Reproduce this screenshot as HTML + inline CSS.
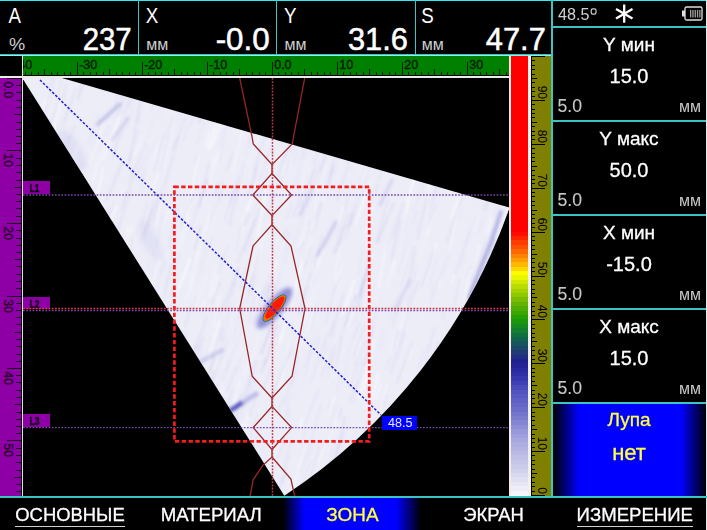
<!DOCTYPE html>
<html><head><meta charset="utf-8"><style>
html,body{margin:0;padding:0;background:#000;width:707px;height:530px;overflow:hidden}
svg{display:block}
</style></head><body>
<svg width="707" height="530" viewBox="0 0 707 530" font-family="Liberation Sans, sans-serif">
<defs>
<linearGradient id="cbar" x1="0" y1="0" x2="0" y2="1">
 <stop offset="0" stop-color="#ff0000"/>
 <stop offset="0.40" stop-color="#ff0000"/>
 <stop offset="0.47" stop-color="#ff5000"/>
 <stop offset="0.50" stop-color="#ff9000"/>
 <stop offset="0.53" stop-color="#ffd000"/>
 <stop offset="0.555" stop-color="#f0f000"/>
 <stop offset="0.60" stop-color="#a0c800"/>
 <stop offset="0.66" stop-color="#30a010"/>
 <stop offset="0.70" stop-color="#208040"/>
 <stop offset="0.74" stop-color="#205868"/>
 <stop offset="0.78" stop-color="#202898"/>
 <stop offset="0.82" stop-color="#3838b0"/>
 <stop offset="0.88" stop-color="#7070c8"/>
 <stop offset="0.94" stop-color="#b8b8e4"/>
 <stop offset="1" stop-color="#f8f8fc"/>
</linearGradient>
<linearGradient id="selh" x1="0" y1="0" x2="1" y2="0">
 <stop offset="0" stop-color="#000"/>
 <stop offset="0.17" stop-color="#0000ff"/>
 <stop offset="0.83" stop-color="#0000ff"/>
 <stop offset="1" stop-color="#000"/>
</linearGradient>
<linearGradient id="selm" x1="0" y1="0" x2="1" y2="0">
 <stop offset="0" stop-color="#000"/>
 <stop offset="0.155" stop-color="#0000ff"/>
 <stop offset="0.82" stop-color="#0000ff"/>
 <stop offset="1" stop-color="#000"/>
</linearGradient>
<filter id="blur1" x="-50%" y="-50%" width="200%" height="200%"><feGaussianBlur stdDeviation="0.9"/></filter><clipPath id="rulclip"><rect x="23" y="56" width="486" height="19"/></clipPath><filter id="blur2" x="-50%" y="-50%" width="200%" height="200%"><feGaussianBlur stdDeviation="2"/></filter><clipPath id="imgclip"><rect x="23" y="78" width="486" height="418"/></clipPath>
<clipPath id="fanclip"><path id="fanpath" d="M13.5,64 L509.6,207.57 A567.87,567.87 0 0 1 284.28,495.63 Z"/></clipPath>
</defs>
<rect x="0" y="0" width="707" height="530" fill="#000" />
<rect x="0" y="0" width="707" height="1" fill="#30ecec" />
<rect x="138" y="0" width="1" height="54" fill="#3cc4c4" />
<rect x="276" y="0" width="1" height="54" fill="#3cc4c4" />
<rect x="415" y="0" width="1" height="54" fill="#3cc4c4" />
<rect x="0" y="54" width="553" height="1" fill="#3cc4c4" />
<rect x="0" y="55" width="553" height="1" fill="#90f0f0" />
<rect x="551" y="0" width="2" height="498" fill="#3cc4c4" />
<text x="8.5" y="22.5" font-size="21.5" fill="#fff" text-anchor="start" textLength="12.5" lengthAdjust="spacingAndGlyphs" >A</text>
<text x="9" y="50.2" font-size="17" fill="#d0d0d0" text-anchor="start" textLength="16.2" lengthAdjust="spacingAndGlyphs" >%</text>
<text x="131.7" y="49.5" font-size="31" fill="#fff" text-anchor="end" textLength="49" lengthAdjust="spacingAndGlyphs" stroke="#fff" stroke-width="0.5" >237</text>
<text x="145.8" y="22.5" font-size="21.5" fill="#fff" text-anchor="start" textLength="12.5" lengthAdjust="spacingAndGlyphs" >X</text>
<text x="146.3" y="50.2" font-size="16" fill="#d0d0d0" text-anchor="start" >мм</text>
<text x="269.7" y="49.5" font-size="31" fill="#fff" text-anchor="end" textLength="54" lengthAdjust="spacingAndGlyphs" stroke="#fff" stroke-width="0.5" >-0.0</text>
<text x="283.9" y="22.5" font-size="21.5" fill="#fff" text-anchor="start" textLength="12.5" lengthAdjust="spacingAndGlyphs" >Y</text>
<text x="284.4" y="50.2" font-size="16" fill="#d0d0d0" text-anchor="start" >мм</text>
<text x="407.9" y="49.5" font-size="31" fill="#fff" text-anchor="end" textLength="60" lengthAdjust="spacingAndGlyphs" stroke="#fff" stroke-width="0.5" >31.6</text>
<text x="421.2" y="22.5" font-size="21.5" fill="#fff" text-anchor="start" textLength="12.5" lengthAdjust="spacingAndGlyphs" >S</text>
<text x="421.7" y="50.2" font-size="16" fill="#d0d0d0" text-anchor="start" >мм</text>
<text x="545.8" y="49.5" font-size="31" fill="#fff" text-anchor="end" textLength="60" lengthAdjust="spacingAndGlyphs" stroke="#fff" stroke-width="0.5" >47.7</text>
<rect x="23" y="56" width="486" height="19" fill="#008000" />
<rect x="23" y="75" width="486" height="1" fill="#000" />
<rect x="0" y="76" width="510" height="2" fill="#ececec" />
<rect x="22" y="56" width="1" height="440" fill="#e0e0e0" />
<rect x="25" y="72" width="1" height="3" fill="#001800" />
<rect x="31" y="72" width="1" height="3" fill="#001800" />
<rect x="38" y="72" width="1" height="3" fill="#001800" />
<rect x="44" y="69" width="1" height="6" fill="#001800" />
<rect x="51" y="72" width="1" height="3" fill="#001800" />
<rect x="57" y="72" width="1" height="3" fill="#001800" />
<rect x="64" y="72" width="1" height="3" fill="#001800" />
<rect x="70" y="72" width="1" height="3" fill="#001800" />
<rect x="77" y="62" width="1" height="13" fill="#001800" />
<text x="79.2" y="68.6" font-size="12.5" fill="#001800" text-anchor="start" stroke="#001800" stroke-width="0.35" >-30</text>
<rect x="83" y="72" width="1" height="3" fill="#001800" />
<rect x="90" y="72" width="1" height="3" fill="#001800" />
<rect x="96" y="72" width="1" height="3" fill="#001800" />
<rect x="103" y="72" width="1" height="3" fill="#001800" />
<rect x="109" y="69" width="1" height="6" fill="#001800" />
<rect x="116" y="72" width="1" height="3" fill="#001800" />
<rect x="122" y="72" width="1" height="3" fill="#001800" />
<rect x="129" y="72" width="1" height="3" fill="#001800" />
<rect x="135" y="72" width="1" height="3" fill="#001800" />
<rect x="142" y="62" width="1" height="13" fill="#001800" />
<text x="144.2" y="68.6" font-size="12.5" fill="#001800" text-anchor="start" stroke="#001800" stroke-width="0.35" >-20</text>
<rect x="148" y="72" width="1" height="3" fill="#001800" />
<rect x="155" y="72" width="1" height="3" fill="#001800" />
<rect x="161" y="72" width="1" height="3" fill="#001800" />
<rect x="168" y="72" width="1" height="3" fill="#001800" />
<rect x="174" y="69" width="1" height="6" fill="#001800" />
<rect x="181" y="72" width="1" height="3" fill="#001800" />
<rect x="187" y="72" width="1" height="3" fill="#001800" />
<rect x="194" y="72" width="1" height="3" fill="#001800" />
<rect x="200" y="72" width="1" height="3" fill="#001800" />
<rect x="207" y="62" width="1" height="13" fill="#001800" />
<text x="209.2" y="68.6" font-size="12.5" fill="#001800" text-anchor="start" stroke="#001800" stroke-width="0.35" >-10</text>
<rect x="213" y="72" width="1" height="3" fill="#001800" />
<rect x="220" y="72" width="1" height="3" fill="#001800" />
<rect x="226" y="72" width="1" height="3" fill="#001800" />
<rect x="233" y="72" width="1" height="3" fill="#001800" />
<rect x="239" y="69" width="1" height="6" fill="#001800" />
<rect x="246" y="72" width="1" height="3" fill="#001800" />
<rect x="252" y="72" width="1" height="3" fill="#001800" />
<rect x="259" y="72" width="1" height="3" fill="#001800" />
<rect x="265" y="72" width="1" height="3" fill="#001800" />
<rect x="272" y="62" width="1" height="13" fill="#001800" />
<text x="274.2" y="68.6" font-size="12.5" fill="#001800" text-anchor="start" stroke="#001800" stroke-width="0.35" >0.0</text>
<rect x="278" y="72" width="1" height="3" fill="#001800" />
<rect x="285" y="72" width="1" height="3" fill="#001800" />
<rect x="291" y="72" width="1" height="3" fill="#001800" />
<rect x="298" y="72" width="1" height="3" fill="#001800" />
<rect x="304" y="69" width="1" height="6" fill="#001800" />
<rect x="311" y="72" width="1" height="3" fill="#001800" />
<rect x="317" y="72" width="1" height="3" fill="#001800" />
<rect x="324" y="72" width="1" height="3" fill="#001800" />
<rect x="330" y="72" width="1" height="3" fill="#001800" />
<rect x="337" y="62" width="1" height="13" fill="#001800" />
<text x="339.2" y="68.6" font-size="12.5" fill="#001800" text-anchor="start" stroke="#001800" stroke-width="0.35" >10</text>
<rect x="343" y="72" width="1" height="3" fill="#001800" />
<rect x="350" y="72" width="1" height="3" fill="#001800" />
<rect x="356" y="72" width="1" height="3" fill="#001800" />
<rect x="363" y="72" width="1" height="3" fill="#001800" />
<rect x="369" y="69" width="1" height="6" fill="#001800" />
<rect x="376" y="72" width="1" height="3" fill="#001800" />
<rect x="382" y="72" width="1" height="3" fill="#001800" />
<rect x="389" y="72" width="1" height="3" fill="#001800" />
<rect x="395" y="72" width="1" height="3" fill="#001800" />
<rect x="402" y="62" width="1" height="13" fill="#001800" />
<text x="404.2" y="68.6" font-size="12.5" fill="#001800" text-anchor="start" stroke="#001800" stroke-width="0.35" >20</text>
<rect x="408" y="72" width="1" height="3" fill="#001800" />
<rect x="415" y="72" width="1" height="3" fill="#001800" />
<rect x="421" y="72" width="1" height="3" fill="#001800" />
<rect x="428" y="72" width="1" height="3" fill="#001800" />
<rect x="434" y="69" width="1" height="6" fill="#001800" />
<rect x="441" y="72" width="1" height="3" fill="#001800" />
<rect x="447" y="72" width="1" height="3" fill="#001800" />
<rect x="454" y="72" width="1" height="3" fill="#001800" />
<rect x="460" y="72" width="1" height="3" fill="#001800" />
<rect x="467" y="62" width="1" height="13" fill="#001800" />
<text x="469.2" y="68.6" font-size="12.5" fill="#001800" text-anchor="start" stroke="#001800" stroke-width="0.35" >30</text>
<rect x="473" y="72" width="1" height="3" fill="#001800" />
<rect x="480" y="72" width="1" height="3" fill="#001800" />
<rect x="486" y="72" width="1" height="3" fill="#001800" />
<rect x="493" y="72" width="1" height="3" fill="#001800" />
<rect x="499" y="69" width="1" height="6" fill="#001800" />
<rect x="506" y="72" width="1" height="3" fill="#001800" />
<g clip-path="url(#rulclip)">
<text x="14.2" y="68.6" font-size="12.5" fill="#001800" text-anchor="start" stroke="#001800" stroke-width="0.35" >-40</text>
</g>
<rect x="0" y="78" width="21" height="418" fill="#8e00a6" />
<rect x="7" y="78" width="14" height="1" fill="#200020" />
<text transform="translate(3.8,81.5) rotate(90)" font-size="12" fill="#200020" stroke="#200020" stroke-width="0.25">0.0</text>
<rect x="16" y="85" width="5" height="1" fill="#200020" />
<rect x="16" y="92" width="5" height="1" fill="#200020" />
<rect x="16" y="100" width="5" height="1" fill="#200020" />
<rect x="16" y="107" width="5" height="1" fill="#200020" />
<rect x="14" y="114" width="7" height="1" fill="#200020" />
<rect x="16" y="122" width="5" height="1" fill="#200020" />
<rect x="16" y="129" width="5" height="1" fill="#200020" />
<rect x="16" y="136" width="5" height="1" fill="#200020" />
<rect x="16" y="143" width="5" height="1" fill="#200020" />
<rect x="7" y="150" width="14" height="1" fill="#200020" />
<text transform="translate(3.8,153.5) rotate(90)" font-size="12" fill="#200020" stroke="#200020" stroke-width="0.25">10</text>
<rect x="16" y="158" width="5" height="1" fill="#200020" />
<rect x="16" y="165" width="5" height="1" fill="#200020" />
<rect x="16" y="172" width="5" height="1" fill="#200020" />
<rect x="16" y="180" width="5" height="1" fill="#200020" />
<rect x="14" y="187" width="7" height="1" fill="#200020" />
<rect x="16" y="194" width="5" height="1" fill="#200020" />
<rect x="16" y="201" width="5" height="1" fill="#200020" />
<rect x="16" y="208" width="5" height="1" fill="#200020" />
<rect x="16" y="216" width="5" height="1" fill="#200020" />
<rect x="7" y="223" width="14" height="1" fill="#200020" />
<text transform="translate(3.8,226.5) rotate(90)" font-size="12" fill="#200020" stroke="#200020" stroke-width="0.25">20</text>
<rect x="16" y="230" width="5" height="1" fill="#200020" />
<rect x="16" y="238" width="5" height="1" fill="#200020" />
<rect x="16" y="245" width="5" height="1" fill="#200020" />
<rect x="16" y="252" width="5" height="1" fill="#200020" />
<rect x="14" y="259" width="7" height="1" fill="#200020" />
<rect x="16" y="266" width="5" height="1" fill="#200020" />
<rect x="16" y="274" width="5" height="1" fill="#200020" />
<rect x="16" y="281" width="5" height="1" fill="#200020" />
<rect x="16" y="288" width="5" height="1" fill="#200020" />
<rect x="7" y="296" width="14" height="1" fill="#200020" />
<text transform="translate(3.8,299.5) rotate(90)" font-size="12" fill="#200020" stroke="#200020" stroke-width="0.25">30</text>
<rect x="16" y="303" width="5" height="1" fill="#200020" />
<rect x="16" y="310" width="5" height="1" fill="#200020" />
<rect x="16" y="317" width="5" height="1" fill="#200020" />
<rect x="16" y="324" width="5" height="1" fill="#200020" />
<rect x="14" y="332" width="7" height="1" fill="#200020" />
<rect x="16" y="339" width="5" height="1" fill="#200020" />
<rect x="16" y="346" width="5" height="1" fill="#200020" />
<rect x="16" y="354" width="5" height="1" fill="#200020" />
<rect x="16" y="361" width="5" height="1" fill="#200020" />
<rect x="7" y="368" width="14" height="1" fill="#200020" />
<text transform="translate(3.8,371.5) rotate(90)" font-size="12" fill="#200020" stroke="#200020" stroke-width="0.25">40</text>
<rect x="16" y="375" width="5" height="1" fill="#200020" />
<rect x="16" y="382" width="5" height="1" fill="#200020" />
<rect x="16" y="390" width="5" height="1" fill="#200020" />
<rect x="16" y="397" width="5" height="1" fill="#200020" />
<rect x="14" y="404" width="7" height="1" fill="#200020" />
<rect x="16" y="412" width="5" height="1" fill="#200020" />
<rect x="16" y="419" width="5" height="1" fill="#200020" />
<rect x="16" y="426" width="5" height="1" fill="#200020" />
<rect x="16" y="433" width="5" height="1" fill="#200020" />
<rect x="7" y="440" width="14" height="1" fill="#200020" />
<text transform="translate(3.8,443.5) rotate(90)" font-size="12" fill="#200020" stroke="#200020" stroke-width="0.25">50</text>
<rect x="16" y="448" width="5" height="1" fill="#200020" />
<rect x="16" y="455" width="5" height="1" fill="#200020" />
<rect x="16" y="462" width="5" height="1" fill="#200020" />
<rect x="16" y="470" width="5" height="1" fill="#200020" />
<rect x="14" y="477" width="7" height="1" fill="#200020" />
<rect x="16" y="484" width="5" height="1" fill="#200020" />
<rect x="16" y="491" width="5" height="1" fill="#200020" />
<g clip-path="url(#imgclip)">
<path d="M13.5,64 L509.6,207.57 A567.87,567.87 0 0 1 284.28,495.63 Z" fill="#ededf8"/>
<g clip-path="url(#fanclip)"><g filter="url(#blur1)"><path d="M185.3,118.5 l-13.2,32.8" stroke="#9090d8" stroke-width="2.5" opacity="0.09" fill="none"/>
<path d="M49.9,283.6 l-2.9,9.1" stroke="#a8a8e0" stroke-width="1" opacity="0.07" fill="none"/>
<path d="M230.3,419.3 l-4.5,12.4" stroke="#9090d8" stroke-width="2.5" opacity="0.11" fill="none"/>
<path d="M215.4,484.9 l-2.1,9.7" stroke="#ffffff" stroke-width="1.5" opacity="0.29" fill="none"/>
<path d="M85.2,182.9 l-14.9,39.6" stroke="#ffffff" stroke-width="2.5" opacity="0.41" fill="none"/>
<path d="M204.5,300.6 l-4.0,9.9" stroke="#ffffff" stroke-width="1.5" opacity="0.42" fill="none"/>
<path d="M234.4,189.5 l-9.7,31.1" stroke="#a8a8e0" stroke-width="1.5" opacity="0.12" fill="none"/>
<path d="M367.0,159.6 l-9.1,30.8" stroke="#8080d0" stroke-width="1.5" opacity="0.10" fill="none"/>
<path d="M323.6,87.7 l-10.5,27.6" stroke="#a8a8e0" stroke-width="1.5" opacity="0.13" fill="none"/>
<path d="M228.2,478.3 l-3.1,10.8" stroke="#a0a0dc" stroke-width="1.5" opacity="0.12" fill="none"/>
<path d="M314.1,306.1 l-5.8,26.5" stroke="#ffffff" stroke-width="1.5" opacity="0.42" fill="none"/>
<path d="M54.7,374.3 l-5.7,20.2" stroke="#a0a0dc" stroke-width="2" opacity="0.12" fill="none"/>
<path d="M462.2,196.7 l-15.1,45.1" stroke="#9090d8" stroke-width="2.5" opacity="0.10" fill="none"/>
<path d="M132.9,175.0 l-12.0,37.1" stroke="#9090d8" stroke-width="2" opacity="0.07" fill="none"/>
<path d="M218.9,182.9 l-4.2,13.1" stroke="#a0a0dc" stroke-width="2.5" opacity="0.12" fill="none"/>
<path d="M507.5,352.3 l-8.2,22.5" stroke="#a8a8e0" stroke-width="1" opacity="0.07" fill="none"/>
<path d="M350.2,55.1 l-15.1,40.2" stroke="#9090d8" stroke-width="1.5" opacity="0.07" fill="none"/>
<path d="M285.8,322.3 l-7.8,19.9" stroke="#ffffff" stroke-width="2.5" opacity="0.41" fill="none"/>
<path d="M386.7,244.5 l-8.4,43.8" stroke="#ffffff" stroke-width="2.5" opacity="0.35" fill="none"/>
<path d="M217.5,265.4 l-8.7,23.2" stroke="#ffffff" stroke-width="1.5" opacity="0.29" fill="none"/>
<path d="M188.1,88.9 l-2.9,7.5" stroke="#a0a0dc" stroke-width="1" opacity="0.11" fill="none"/>
<path d="M57.5,147.9 l-6.2,23.0" stroke="#ffffff" stroke-width="1.5" opacity="0.34" fill="none"/>
<path d="M87.5,411.3 l-14.6,47.5" stroke="#a0a0dc" stroke-width="2" opacity="0.07" fill="none"/>
<path d="M72.1,208.0 l-4.1,18.7" stroke="#ffffff" stroke-width="1.5" opacity="0.26" fill="none"/>
<path d="M488.0,290.4 l-3.9,13.6" stroke="#ffffff" stroke-width="1" opacity="0.32" fill="none"/>
<path d="M341.2,88.3 l-12.3,41.7" stroke="#a0a0dc" stroke-width="1.5" opacity="0.12" fill="none"/>
<path d="M284.7,394.7 l-7.5,20.5" stroke="#a8a8e0" stroke-width="1.5" opacity="0.13" fill="none"/>
<path d="M387.3,153.4 l-9.4,28.2" stroke="#9090d8" stroke-width="1" opacity="0.12" fill="none"/>
<path d="M256.7,137.4 l-10.7,31.7" stroke="#a0a0dc" stroke-width="1.5" opacity="0.07" fill="none"/>
<path d="M73.3,261.5 l-6.5,21.2" stroke="#9090d8" stroke-width="2.5" opacity="0.10" fill="none"/>
<path d="M341.4,408.3 l-2.9,11.2" stroke="#8080d0" stroke-width="2" opacity="0.12" fill="none"/>
<path d="M260.9,127.3 l-13.3,39.0" stroke="#ffffff" stroke-width="2" opacity="0.35" fill="none"/>
<path d="M486.7,374.6 l-5.5,14.1" stroke="#ffffff" stroke-width="1.5" opacity="0.48" fill="none"/>
<path d="M419.1,111.9 l-7.8,42.0" stroke="#a8a8e0" stroke-width="1.5" opacity="0.10" fill="none"/>
<path d="M90.4,52.5 l-12.5,47.2" stroke="#8080d0" stroke-width="2.5" opacity="0.13" fill="none"/>
<path d="M240.0,424.8 l-14.8,40.1" stroke="#a8a8e0" stroke-width="1.5" opacity="0.08" fill="none"/>
<path d="M140.7,313.2 l-5.7,18.0" stroke="#9090d8" stroke-width="1.5" opacity="0.13" fill="none"/>
<path d="M196.6,251.1 l-6.5,31.9" stroke="#ffffff" stroke-width="2" opacity="0.28" fill="none"/>
<path d="M99.5,267.8 l-10.2,43.5" stroke="#9090d8" stroke-width="2.5" opacity="0.12" fill="none"/>
<path d="M99.6,115.0 l-12.4,31.7" stroke="#a0a0dc" stroke-width="1" opacity="0.11" fill="none"/>
<path d="M284.2,257.6 l-8.3,39.8" stroke="#a8a8e0" stroke-width="1" opacity="0.08" fill="none"/>
<path d="M45.8,99.6 l-10.3,24.9" stroke="#ffffff" stroke-width="1" opacity="0.33" fill="none"/>
<path d="M499.7,322.9 l-5.5,15.4" stroke="#ffffff" stroke-width="2.5" opacity="0.45" fill="none"/>
<path d="M271.9,161.8 l-6.2,29.3" stroke="#ffffff" stroke-width="1.5" opacity="0.47" fill="none"/>
<path d="M123.2,250.3 l-7.9,24.2" stroke="#9090d8" stroke-width="1.5" opacity="0.11" fill="none"/>
<path d="M233.7,151.8 l-7.5,19.3" stroke="#8080d0" stroke-width="1.5" opacity="0.11" fill="none"/>
<path d="M201.5,172.3 l-4.0,13.2" stroke="#ffffff" stroke-width="1" opacity="0.47" fill="none"/>
<path d="M101.9,348.7 l-4.2,16.9" stroke="#ffffff" stroke-width="2.5" opacity="0.33" fill="none"/>
<path d="M123.3,189.3 l-14.7,35.4" stroke="#ffffff" stroke-width="2.5" opacity="0.36" fill="none"/>
<path d="M33.7,196.1 l-9.7,32.8" stroke="#9090d8" stroke-width="1" opacity="0.14" fill="none"/>
<path d="M408.4,482.0 l-4.2,11.7" stroke="#a8a8e0" stroke-width="1" opacity="0.08" fill="none"/>
<path d="M88.5,229.0 l-10.1,45.2" stroke="#ffffff" stroke-width="1.5" opacity="0.29" fill="none"/>
<path d="M477.3,298.0 l-13.9,34.8" stroke="#8080d0" stroke-width="1" opacity="0.07" fill="none"/>
<path d="M460.3,181.6 l-3.2,8.1" stroke="#9090d8" stroke-width="1.5" opacity="0.11" fill="none"/>
<path d="M131.5,177.7 l-5.0,12.1" stroke="#ffffff" stroke-width="2.5" opacity="0.48" fill="none"/>
<path d="M156.4,111.4 l-10.3,28.3" stroke="#a8a8e0" stroke-width="1" opacity="0.08" fill="none"/>
<path d="M113.6,454.4 l-9.7,33.0" stroke="#a0a0dc" stroke-width="1.5" opacity="0.10" fill="none"/>
<path d="M353.1,165.8 l-7.4,41.1" stroke="#9090d8" stroke-width="1" opacity="0.06" fill="none"/>
<path d="M272.8,476.6 l-10.1,27.8" stroke="#9090d8" stroke-width="2" opacity="0.11" fill="none"/>
<path d="M341.7,337.2 l-6.3,30.3" stroke="#a0a0dc" stroke-width="2.5" opacity="0.12" fill="none"/>
<path d="M506.6,196.5 l-10.4,41.7" stroke="#ffffff" stroke-width="1.5" opacity="0.50" fill="none"/>
<path d="M502.2,425.8 l-2.2,8.3" stroke="#ffffff" stroke-width="1.5" opacity="0.29" fill="none"/>
<path d="M67.0,410.2 l-11.2,43.1" stroke="#ffffff" stroke-width="1.5" opacity="0.31" fill="none"/>
<path d="M165.8,260.6 l-4.4,13.9" stroke="#a0a0dc" stroke-width="1.5" opacity="0.14" fill="none"/>
<path d="M498.3,296.3 l-3.4,18.0" stroke="#a8a8e0" stroke-width="1.5" opacity="0.09" fill="none"/>
<path d="M24.5,220.7 l-8.0,26.8" stroke="#a8a8e0" stroke-width="1.5" opacity="0.10" fill="none"/>
<path d="M24.2,178.0 l-3.6,11.2" stroke="#ffffff" stroke-width="1" opacity="0.26" fill="none"/>
<path d="M173.7,154.5 l-9.2,31.3" stroke="#8080d0" stroke-width="1.5" opacity="0.13" fill="none"/>
<path d="M409.0,307.1 l-9.6,38.9" stroke="#a8a8e0" stroke-width="2" opacity="0.08" fill="none"/>
<path d="M328.3,111.6 l-10.3,41.4" stroke="#8080d0" stroke-width="2.5" opacity="0.09" fill="none"/>
<path d="M368.9,264.9 l-10.8,44.9" stroke="#9090d8" stroke-width="2.5" opacity="0.13" fill="none"/>
<path d="M310.7,436.1 l-9.0,35.6" stroke="#9090d8" stroke-width="1.5" opacity="0.06" fill="none"/>
<path d="M86.5,219.0 l-2.7,12.1" stroke="#9090d8" stroke-width="2.5" opacity="0.11" fill="none"/>
<path d="M332.4,349.5 l-11.0,26.3" stroke="#8080d0" stroke-width="1" opacity="0.13" fill="none"/>
<path d="M463.5,94.9 l-7.1,29.3" stroke="#a0a0dc" stroke-width="2" opacity="0.12" fill="none"/>
<path d="M441.4,152.3 l-13.6,37.4" stroke="#ffffff" stroke-width="2" opacity="0.46" fill="none"/>
<path d="M61.4,452.2 l-7.6,18.6" stroke="#9090d8" stroke-width="1.5" opacity="0.11" fill="none"/>
<path d="M187.4,332.3 l-9.7,35.8" stroke="#9090d8" stroke-width="1.5" opacity="0.10" fill="none"/>
<path d="M260.1,482.5 l-4.2,11.4" stroke="#a0a0dc" stroke-width="2" opacity="0.12" fill="none"/>
<path d="M163.5,250.5 l-7.2,39.6" stroke="#a8a8e0" stroke-width="2.5" opacity="0.08" fill="none"/>
<path d="M65.8,264.0 l-7.5,18.7" stroke="#ffffff" stroke-width="2.5" opacity="0.50" fill="none"/>
<path d="M218.3,442.3 l-17.6,43.7" stroke="#a8a8e0" stroke-width="1" opacity="0.12" fill="none"/>
<path d="M152.6,208.5 l-8.6,32.2" stroke="#9090d8" stroke-width="1.5" opacity="0.12" fill="none"/>
<path d="M138.8,442.9 l-10.9,26.3" stroke="#ffffff" stroke-width="1" opacity="0.42" fill="none"/>
<path d="M222.6,370.6 l-8.0,24.2" stroke="#a0a0dc" stroke-width="1" opacity="0.06" fill="none"/>
<path d="M389.1,424.4 l-2.5,12.8" stroke="#8080d0" stroke-width="1" opacity="0.08" fill="none"/>
<path d="M209.1,214.9 l-13.4,48.1" stroke="#ffffff" stroke-width="1.5" opacity="0.44" fill="none"/>
<path d="M439.9,185.8 l-2.6,9.8" stroke="#a8a8e0" stroke-width="1.5" opacity="0.14" fill="none"/>
<path d="M238.3,186.0 l-9.1,39.4" stroke="#9090d8" stroke-width="2" opacity="0.12" fill="none"/>
<path d="M335.7,439.9 l-13.2,45.7" stroke="#9090d8" stroke-width="1" opacity="0.13" fill="none"/>
<path d="M222.8,327.7 l-2.9,13.5" stroke="#9090d8" stroke-width="2" opacity="0.13" fill="none"/>
<path d="M293.8,131.4 l-8.4,24.0" stroke="#8080d0" stroke-width="1.5" opacity="0.12" fill="none"/>
<path d="M342.5,236.0 l-5.2,17.2" stroke="#9090d8" stroke-width="2" opacity="0.07" fill="none"/>
<path d="M105.8,137.3 l-13.3,44.1" stroke="#ffffff" stroke-width="1.5" opacity="0.48" fill="none"/>
<path d="M510.7,257.0 l-4.9,13.0" stroke="#a8a8e0" stroke-width="1" opacity="0.09" fill="none"/>
<path d="M67.2,163.8 l-5.1,18.1" stroke="#8080d0" stroke-width="1" opacity="0.13" fill="none"/>
<path d="M210.4,382.8 l-5.6,15.9" stroke="#ffffff" stroke-width="1" opacity="0.32" fill="none"/>
<path d="M497.9,110.1 l-7.6,28.1" stroke="#9090d8" stroke-width="1.5" opacity="0.08" fill="none"/>
<path d="M144.2,228.8 l-5.0,26.3" stroke="#a8a8e0" stroke-width="1" opacity="0.06" fill="none"/>
<path d="M371.4,441.7 l-7.5,26.9" stroke="#9090d8" stroke-width="1" opacity="0.09" fill="none"/>
<path d="M478.2,403.4 l-8.1,43.2" stroke="#9090d8" stroke-width="1.5" opacity="0.08" fill="none"/>
<path d="M95.9,481.8 l-2.7,12.3" stroke="#9090d8" stroke-width="2" opacity="0.10" fill="none"/>
<path d="M41.1,397.7 l-3.5,17.4" stroke="#a8a8e0" stroke-width="1.5" opacity="0.11" fill="none"/>
<path d="M286.2,239.5 l-14.8,37.3" stroke="#ffffff" stroke-width="1.5" opacity="0.49" fill="none"/>
<path d="M121.9,163.2 l-15.9,38.0" stroke="#a0a0dc" stroke-width="2.5" opacity="0.14" fill="none"/>
<path d="M163.9,185.7 l-14.7,40.7" stroke="#a8a8e0" stroke-width="2.5" opacity="0.10" fill="none"/>
<path d="M41.0,230.7 l-13.3,32.7" stroke="#ffffff" stroke-width="1.5" opacity="0.47" fill="none"/>
<path d="M339.8,96.5 l-5.3,16.7" stroke="#a8a8e0" stroke-width="1.5" opacity="0.10" fill="none"/>
<path d="M364.5,367.8 l-7.2,22.1" stroke="#a0a0dc" stroke-width="1" opacity="0.12" fill="none"/>
<path d="M275.3,135.2 l-15.9,46.1" stroke="#a8a8e0" stroke-width="1.5" opacity="0.10" fill="none"/>
<path d="M151.5,446.3 l-3.3,12.1" stroke="#a8a8e0" stroke-width="2.5" opacity="0.13" fill="none"/>
<path d="M259.1,456.5 l-2.8,10.0" stroke="#9090d8" stroke-width="2" opacity="0.08" fill="none"/>
<path d="M499.2,126.3 l-3.8,9.4" stroke="#ffffff" stroke-width="2" opacity="0.47" fill="none"/>
<path d="M457.8,360.6 l-9.6,49.0" stroke="#a8a8e0" stroke-width="1.5" opacity="0.07" fill="none"/>
<path d="M479.8,386.4 l-2.4,9.0" stroke="#a0a0dc" stroke-width="2" opacity="0.14" fill="none"/>
<path d="M238.9,111.6 l-4.2,10.5" stroke="#9090d8" stroke-width="2" opacity="0.10" fill="none"/>
<path d="M398.4,214.4 l-13.2,38.1" stroke="#9090d8" stroke-width="2" opacity="0.06" fill="none"/>
<path d="M260.2,208.4 l-16.3,43.7" stroke="#8080d0" stroke-width="1.5" opacity="0.13" fill="none"/>
<path d="M39.7,226.2 l-9.7,41.0" stroke="#ffffff" stroke-width="1" opacity="0.26" fill="none"/>
<path d="M52.9,456.5 l-4.4,18.3" stroke="#a0a0dc" stroke-width="2.5" opacity="0.09" fill="none"/>
<path d="M185.3,475.3 l-2.3,9.6" stroke="#a0a0dc" stroke-width="1.5" opacity="0.08" fill="none"/>
<path d="M377.5,305.6 l-7.9,41.1" stroke="#9090d8" stroke-width="1" opacity="0.13" fill="none"/>
<path d="M75.7,364.3 l-6.3,26.8" stroke="#ffffff" stroke-width="1.5" opacity="0.45" fill="none"/>
<path d="M85.8,279.4 l-1.6,8.2" stroke="#8080d0" stroke-width="1.5" opacity="0.12" fill="none"/>
<path d="M320.9,200.8 l-6.8,20.3" stroke="#9090d8" stroke-width="2.5" opacity="0.10" fill="none"/>
<path d="M215.1,126.6 l-6.4,24.3" stroke="#ffffff" stroke-width="2" opacity="0.39" fill="none"/>
<path d="M101.1,247.7 l-4.6,11.5" stroke="#9090d8" stroke-width="2.5" opacity="0.08" fill="none"/>
<path d="M235.0,472.2 l-17.3,45.7" stroke="#ffffff" stroke-width="1.5" opacity="0.37" fill="none"/>
<path d="M460.2,156.1 l-7.0,29.8" stroke="#a0a0dc" stroke-width="1" opacity="0.08" fill="none"/>
<path d="M304.6,212.1 l-13.6,36.5" stroke="#a8a8e0" stroke-width="1.5" opacity="0.08" fill="none"/>
<path d="M100.3,434.9 l-10.4,30.6" stroke="#a0a0dc" stroke-width="2" opacity="0.14" fill="none"/>
<path d="M273.9,149.2 l-10.7,40.6" stroke="#9090d8" stroke-width="1" opacity="0.06" fill="none"/>
<path d="M456.8,156.6 l-8.4,25.5" stroke="#a8a8e0" stroke-width="1.5" opacity="0.07" fill="none"/>
<path d="M116.0,472.4 l-6.3,31.9" stroke="#ffffff" stroke-width="1.5" opacity="0.47" fill="none"/>
<path d="M243.9,161.8 l-7.7,39.9" stroke="#8080d0" stroke-width="1" opacity="0.11" fill="none"/>
<path d="M328.0,152.6 l-8.5,21.9" stroke="#a0a0dc" stroke-width="1.5" opacity="0.06" fill="none"/>
<path d="M383.4,442.4 l-9.2,41.2" stroke="#8080d0" stroke-width="2" opacity="0.09" fill="none"/>
<path d="M325.6,99.0 l-2.7,8.9" stroke="#9090d8" stroke-width="2" opacity="0.09" fill="none"/>
<path d="M412.0,348.6 l-4.1,13.9" stroke="#ffffff" stroke-width="1.5" opacity="0.42" fill="none"/>
<path d="M222.8,181.5 l-3.9,20.5" stroke="#8080d0" stroke-width="1.5" opacity="0.11" fill="none"/>
<path d="M199.0,227.3 l-7.9,43.6" stroke="#8080d0" stroke-width="1.5" opacity="0.08" fill="none"/>
<path d="M377.6,153.5 l-1.6,8.1" stroke="#9090d8" stroke-width="2" opacity="0.13" fill="none"/>
<path d="M223.9,436.8 l-9.7,25.6" stroke="#9090d8" stroke-width="1" opacity="0.10" fill="none"/>
<path d="M335.5,455.5 l-3.1,11.3" stroke="#8080d0" stroke-width="1.5" opacity="0.10" fill="none"/>
<path d="M94.4,177.2 l-5.8,29.3" stroke="#ffffff" stroke-width="1" opacity="0.37" fill="none"/>
<path d="M417.3,478.2 l-5.9,15.2" stroke="#ffffff" stroke-width="1" opacity="0.33" fill="none"/>
<path d="M319.2,338.0 l-2.8,11.3" stroke="#8080d0" stroke-width="1.5" opacity="0.12" fill="none"/>
<path d="M133.5,222.7 l-9.4,42.5" stroke="#ffffff" stroke-width="1.5" opacity="0.30" fill="none"/>
<path d="M220.3,281.5 l-8.8,22.5" stroke="#8080d0" stroke-width="1.5" opacity="0.13" fill="none"/>
<path d="M119.8,429.1 l-10.9,42.0" stroke="#9090d8" stroke-width="1.5" opacity="0.09" fill="none"/>
<path d="M248.5,415.4 l-10.4,39.3" stroke="#ffffff" stroke-width="1.5" opacity="0.31" fill="none"/>
<path d="M215.9,214.4 l-10.3,27.3" stroke="#ffffff" stroke-width="1" opacity="0.50" fill="none"/>
<path d="M251.7,245.6 l-7.4,33.2" stroke="#ffffff" stroke-width="1.5" opacity="0.35" fill="none"/>
<path d="M55.5,212.8 l-5.2,22.8" stroke="#ffffff" stroke-width="2.5" opacity="0.41" fill="none"/>
<path d="M47.5,103.9 l-15.2,44.2" stroke="#9090d8" stroke-width="2.5" opacity="0.06" fill="none"/>
<path d="M275.6,210.1 l-17.3,44.7" stroke="#ffffff" stroke-width="1" opacity="0.43" fill="none"/>
<path d="M426.5,129.7 l-14.2,47.1" stroke="#8080d0" stroke-width="1.5" opacity="0.12" fill="none"/>
<path d="M478.6,87.1 l-5.3,22.1" stroke="#a0a0dc" stroke-width="1.5" opacity="0.13" fill="none"/>
<path d="M156.8,414.0 l-4.0,13.4" stroke="#a8a8e0" stroke-width="2" opacity="0.11" fill="none"/>
<path d="M325.9,161.0 l-8.2,22.2" stroke="#a8a8e0" stroke-width="2" opacity="0.11" fill="none"/>
<path d="M159.0,199.4 l-5.3,23.2" stroke="#9090d8" stroke-width="1.5" opacity="0.12" fill="none"/>
<path d="M51.0,415.9 l-14.4,46.4" stroke="#ffffff" stroke-width="2.5" opacity="0.42" fill="none"/>
<path d="M462.3,163.5 l-6.4,29.8" stroke="#a0a0dc" stroke-width="1.5" opacity="0.09" fill="none"/>
<path d="M204.9,122.7 l-8.1,20.3" stroke="#a8a8e0" stroke-width="1.5" opacity="0.11" fill="none"/>
<path d="M494.3,183.4 l-9.7,28.0" stroke="#8080d0" stroke-width="2.5" opacity="0.13" fill="none"/>
<path d="M382.0,383.1 l-5.7,16.3" stroke="#ffffff" stroke-width="2" opacity="0.38" fill="none"/>
<path d="M461.0,118.3 l-4.5,17.0" stroke="#9090d8" stroke-width="1" opacity="0.06" fill="none"/>
<path d="M197.9,104.9 l-7.9,21.6" stroke="#a0a0dc" stroke-width="2.5" opacity="0.11" fill="none"/>
<path d="M125.1,325.3 l-10.1,26.1" stroke="#8080d0" stroke-width="1.5" opacity="0.07" fill="none"/>
<path d="M72.0,322.7 l-10.1,43.4" stroke="#a0a0dc" stroke-width="2" opacity="0.14" fill="none"/>
<path d="M53.6,401.1 l-12.2,43.8" stroke="#ffffff" stroke-width="2.5" opacity="0.40" fill="none"/>
<path d="M276.5,275.0 l-5.8,13.8" stroke="#ffffff" stroke-width="1" opacity="0.26" fill="none"/>
<path d="M119.5,116.9 l-17.0,43.1" stroke="#ffffff" stroke-width="2.5" opacity="0.41" fill="none"/>
<path d="M120.5,233.3 l-7.6,28.8" stroke="#ffffff" stroke-width="2" opacity="0.29" fill="none"/>
<path d="M172.6,194.2 l-2.0,9.8" stroke="#8080d0" stroke-width="2" opacity="0.10" fill="none"/>
<path d="M212.4,236.3 l-17.2,43.0" stroke="#a8a8e0" stroke-width="2" opacity="0.08" fill="none"/>
<path d="M73.1,165.3 l-3.1,9.1" stroke="#8080d0" stroke-width="1.5" opacity="0.06" fill="none"/>
<path d="M335.2,344.0 l-7.2,36.1" stroke="#a0a0dc" stroke-width="1.5" opacity="0.11" fill="none"/>
<path d="M501.6,142.6 l-17.3,41.5" stroke="#a8a8e0" stroke-width="1.5" opacity="0.13" fill="none"/>
<path d="M127.5,116.7 l-16.3,43.5" stroke="#a0a0dc" stroke-width="2" opacity="0.11" fill="none"/>
<path d="M210.2,413.4 l-8.5,45.9" stroke="#ffffff" stroke-width="2.5" opacity="0.37" fill="none"/>
<path d="M280.9,68.3 l-1.7,9.0" stroke="#ffffff" stroke-width="1.5" opacity="0.47" fill="none"/>
<path d="M411.2,222.7 l-8.9,31.3" stroke="#a8a8e0" stroke-width="1.5" opacity="0.06" fill="none"/>
<path d="M76.2,330.2 l-2.7,14.5" stroke="#9090d8" stroke-width="1" opacity="0.06" fill="none"/>
<path d="M363.8,324.5 l-8.8,36.2" stroke="#ffffff" stroke-width="1" opacity="0.44" fill="none"/>
<path d="M121.5,465.7 l-7.7,29.4" stroke="#9090d8" stroke-width="2" opacity="0.08" fill="none"/>
<path d="M124.3,61.1 l-9.4,46.9" stroke="#8080d0" stroke-width="1" opacity="0.11" fill="none"/>
<path d="M259.1,107.1 l-10.6,39.9" stroke="#a0a0dc" stroke-width="1.5" opacity="0.09" fill="none"/>
<path d="M156.9,199.1 l-17.8,43.6" stroke="#a0a0dc" stroke-width="1.5" opacity="0.12" fill="none"/>
<path d="M317.3,265.0 l-4.7,19.5" stroke="#9090d8" stroke-width="2" opacity="0.09" fill="none"/>
<path d="M404.0,201.1 l-10.5,36.1" stroke="#8080d0" stroke-width="1.5" opacity="0.13" fill="none"/>
<path d="M67.5,415.5 l-5.9,14.0" stroke="#a0a0dc" stroke-width="1.5" opacity="0.12" fill="none"/>
<path d="M503.3,58.2 l-8.3,27.4" stroke="#ffffff" stroke-width="1.5" opacity="0.40" fill="none"/>
<path d="M494.8,276.4 l-11.5,30.2" stroke="#8080d0" stroke-width="1.5" opacity="0.08" fill="none"/>
<path d="M107.1,454.4 l-11.6,38.5" stroke="#9090d8" stroke-width="2.5" opacity="0.11" fill="none"/>
<path d="M196.7,230.5 l-5.0,24.1" stroke="#ffffff" stroke-width="1" opacity="0.47" fill="none"/>
<path d="M34.2,149.3 l-3.8,18.7" stroke="#a8a8e0" stroke-width="2.5" opacity="0.09" fill="none"/>
<path d="M457.0,157.3 l-7.7,26.3" stroke="#8080d0" stroke-width="2.5" opacity="0.06" fill="none"/>
<path d="M311.6,273.1 l-13.2,42.4" stroke="#8080d0" stroke-width="2.5" opacity="0.09" fill="none"/>
<path d="M250.2,357.5 l-6.4,17.7" stroke="#ffffff" stroke-width="1.5" opacity="0.41" fill="none"/>
<path d="M363.6,279.0 l-4.5,18.7" stroke="#a8a8e0" stroke-width="2.5" opacity="0.12" fill="none"/>
<path d="M502.9,365.2 l-10.6,31.6" stroke="#a0a0dc" stroke-width="1.5" opacity="0.14" fill="none"/>
<path d="M155.6,457.4 l-17.7,46.5" stroke="#a8a8e0" stroke-width="1" opacity="0.09" fill="none"/>
<path d="M507.9,393.3 l-11.7,37.0" stroke="#9090d8" stroke-width="1.5" opacity="0.11" fill="none"/>
<path d="M77.0,147.5 l-9.3,22.5" stroke="#ffffff" stroke-width="2" opacity="0.42" fill="none"/>
<path d="M270.2,329.1 l-9.9,25.6" stroke="#8080d0" stroke-width="2.5" opacity="0.09" fill="none"/>
<path d="M386.6,447.9 l-7.1,25.1" stroke="#a8a8e0" stroke-width="2" opacity="0.11" fill="none"/>
<path d="M344.4,430.5 l-9.4,33.7" stroke="#8080d0" stroke-width="1.5" opacity="0.07" fill="none"/>
<path d="M83.2,246.8 l-4.6,18.3" stroke="#a8a8e0" stroke-width="2" opacity="0.12" fill="none"/>
<path d="M372.3,331.9 l-5.6,17.6" stroke="#9090d8" stroke-width="2" opacity="0.11" fill="none"/>
<path d="M228.9,338.3 l-16.6,44.1" stroke="#9090d8" stroke-width="1.5" opacity="0.09" fill="none"/>
<path d="M261.4,484.5 l-2.7,9.2" stroke="#8080d0" stroke-width="1.5" opacity="0.12" fill="none"/>
<path d="M482.6,287.4 l-3.3,11.8" stroke="#a8a8e0" stroke-width="2.5" opacity="0.12" fill="none"/>
<path d="M277.0,324.3 l-12.1,41.1" stroke="#8080d0" stroke-width="2" opacity="0.14" fill="none"/>
<path d="M125.8,352.4 l-5.6,23.8" stroke="#8080d0" stroke-width="1" opacity="0.14" fill="none"/>
<path d="M197.2,85.1 l-6.0,18.6" stroke="#9090d8" stroke-width="1" opacity="0.09" fill="none"/>
<path d="M229.9,359.5 l-7.6,21.5" stroke="#a0a0dc" stroke-width="1.5" opacity="0.12" fill="none"/>
<path d="M482.5,288.3 l-3.8,16.8" stroke="#ffffff" stroke-width="2" opacity="0.30" fill="none"/>
<path d="M88.8,383.7 l-10.9,40.6" stroke="#8080d0" stroke-width="2" opacity="0.10" fill="none"/>
<path d="M133.7,473.4 l-5.9,22.1" stroke="#ffffff" stroke-width="2" opacity="0.50" fill="none"/>
<path d="M398.3,329.9 l-12.0,39.0" stroke="#a0a0dc" stroke-width="1.5" opacity="0.12" fill="none"/>
<path d="M362.2,475.2 l-10.6,34.9" stroke="#a0a0dc" stroke-width="1.5" opacity="0.08" fill="none"/>
<path d="M171.2,263.6 l-6.7,25.1" stroke="#a8a8e0" stroke-width="1.5" opacity="0.13" fill="none"/>
<path d="M442.9,73.6 l-8.5,41.9" stroke="#ffffff" stroke-width="1.5" opacity="0.46" fill="none"/>
<path d="M331.0,72.3 l-1.6,8.3" stroke="#a0a0dc" stroke-width="1.5" opacity="0.11" fill="none"/>
<path d="M305.8,429.8 l-4.7,15.1" stroke="#a8a8e0" stroke-width="1.5" opacity="0.13" fill="none"/>
<path d="M413.9,120.3 l-12.0,43.8" stroke="#8080d0" stroke-width="1" opacity="0.13" fill="none"/>
<path d="M291.7,333.9 l-5.9,19.6" stroke="#ffffff" stroke-width="1.5" opacity="0.27" fill="none"/>
<path d="M433.6,352.6 l-4.7,12.0" stroke="#a8a8e0" stroke-width="2" opacity="0.13" fill="none"/>
<path d="M254.7,295.7 l-5.6,27.8" stroke="#a8a8e0" stroke-width="2" opacity="0.10" fill="none"/>
<path d="M285.3,437.0 l-1.8,8.1" stroke="#8080d0" stroke-width="2" opacity="0.11" fill="none"/>
<path d="M349.6,420.1 l-7.2,22.6" stroke="#a8a8e0" stroke-width="1" opacity="0.11" fill="none"/>
<path d="M335.9,66.0 l-8.3,32.6" stroke="#9090d8" stroke-width="1.5" opacity="0.10" fill="none"/>
<path d="M258.6,451.4 l-2.3,9.1" stroke="#a0a0dc" stroke-width="1.5" opacity="0.07" fill="none"/>
<path d="M348.5,197.2 l-11.2,39.1" stroke="#a0a0dc" stroke-width="1.5" opacity="0.09" fill="none"/>
<path d="M234.0,288.1 l-14.1,40.3" stroke="#ffffff" stroke-width="2" opacity="0.33" fill="none"/>
<path d="M506.2,434.8 l-7.8,21.1" stroke="#9090d8" stroke-width="2" opacity="0.09" fill="none"/>
<path d="M179.6,182.9 l-8.4,31.5" stroke="#ffffff" stroke-width="1" opacity="0.43" fill="none"/>
<path d="M455.6,299.8 l-3.3,9.5" stroke="#9090d8" stroke-width="1" opacity="0.08" fill="none"/>
<path d="M475.5,314.4 l-8.0,34.7" stroke="#ffffff" stroke-width="2.5" opacity="0.34" fill="none"/>
<path d="M95.8,341.6 l-7.6,36.2" stroke="#a8a8e0" stroke-width="1" opacity="0.06" fill="none"/>
<path d="M332.4,331.5 l-3.9,14.8" stroke="#ffffff" stroke-width="1" opacity="0.44" fill="none"/>
<path d="M470.5,340.5 l-5.1,22.9" stroke="#ffffff" stroke-width="1.5" opacity="0.43" fill="none"/>
<path d="M444.4,145.1 l-3.6,8.7" stroke="#8080d0" stroke-width="2.5" opacity="0.11" fill="none"/>
<path d="M471.0,269.4 l-6.5,29.2" stroke="#ffffff" stroke-width="2" opacity="0.42" fill="none"/>
<path d="M223.2,81.3 l-9.8,35.2" stroke="#ffffff" stroke-width="1.5" opacity="0.44" fill="none"/>
<path d="M291.7,92.0 l-5.6,27.3" stroke="#ffffff" stroke-width="1" opacity="0.25" fill="none"/>
<path d="M364.0,99.8 l-18.0,45.1" stroke="#a8a8e0" stroke-width="1" opacity="0.10" fill="none"/>
<path d="M158.1,301.6 l-6.3,26.2" stroke="#a0a0dc" stroke-width="1" opacity="0.12" fill="none"/>
<path d="M376.8,419.9 l-14.3,35.9" stroke="#8080d0" stroke-width="2.5" opacity="0.10" fill="none"/>
<path d="M356.8,431.2 l-17.5,42.9" stroke="#9090d8" stroke-width="1" opacity="0.06" fill="none"/>
<path d="M458.1,349.1 l-10.5,32.3" stroke="#8080d0" stroke-width="1.5" opacity="0.11" fill="none"/>
<path d="M494.7,413.1 l-10.9,31.7" stroke="#8080d0" stroke-width="2.5" opacity="0.10" fill="none"/>
<path d="M358.2,112.6 l-13.1,39.4" stroke="#8080d0" stroke-width="1.5" opacity="0.12" fill="none"/>
<path d="M258.2,391.8 l-9.0,25.5" stroke="#a0a0dc" stroke-width="2.5" opacity="0.08" fill="none"/>
<path d="M53.8,470.5 l-8.1,36.6" stroke="#ffffff" stroke-width="1.5" opacity="0.43" fill="none"/>
<path d="M33.4,114.3 l-11.6,41.4" stroke="#ffffff" stroke-width="1.5" opacity="0.35" fill="none"/>
<path d="M207.0,393.2 l-5.3,17.0" stroke="#a0a0dc" stroke-width="1" opacity="0.08" fill="none"/>
<path d="M231.3,301.6 l-8.6,41.4" stroke="#a0a0dc" stroke-width="1" opacity="0.13" fill="none"/>
<path d="M423.1,427.8 l-10.7,30.2" stroke="#8080d0" stroke-width="2.5" opacity="0.12" fill="none"/>
<path d="M269.4,285.2 l-8.9,29.4" stroke="#a8a8e0" stroke-width="2" opacity="0.12" fill="none"/>
<path d="M377.8,482.7 l-7.9,19.5" stroke="#ffffff" stroke-width="2" opacity="0.43" fill="none"/>
<path d="M475.0,318.2 l-2.6,8.0" stroke="#9090d8" stroke-width="2.5" opacity="0.10" fill="none"/>
<path d="M197.5,85.1 l-7.0,23.7" stroke="#ffffff" stroke-width="1.5" opacity="0.33" fill="none"/>
<path d="M271.2,148.9 l-6.3,15.7" stroke="#a0a0dc" stroke-width="1.5" opacity="0.11" fill="none"/>
<path d="M203.3,384.6 l-14.9,41.4" stroke="#a0a0dc" stroke-width="2" opacity="0.13" fill="none"/>
<path d="M204.0,263.9 l-3.7,10.8" stroke="#a0a0dc" stroke-width="1" opacity="0.08" fill="none"/>
<path d="M319.2,102.3 l-3.4,16.2" stroke="#ffffff" stroke-width="2.5" opacity="0.40" fill="none"/>
<path d="M128.3,458.8 l-7.3,18.4" stroke="#ffffff" stroke-width="2" opacity="0.45" fill="none"/>
<path d="M493.8,174.7 l-3.3,9.0" stroke="#ffffff" stroke-width="1.5" opacity="0.27" fill="none"/>
<path d="M51.6,288.4 l-13.2,42.6" stroke="#ffffff" stroke-width="1" opacity="0.41" fill="none"/>
<path d="M473.8,368.2 l-3.8,11.1" stroke="#8080d0" stroke-width="1.5" opacity="0.07" fill="none"/>
<path d="M472.9,280.1 l-3.3,15.3" stroke="#a8a8e0" stroke-width="1.5" opacity="0.14" fill="none"/>
<path d="M131.6,77.7 l-6.0,17.8" stroke="#9090d8" stroke-width="2.5" opacity="0.13" fill="none"/>
<path d="M47.9,389.9 l-9.7,36.5" stroke="#9090d8" stroke-width="2" opacity="0.07" fill="none"/>
<path d="M177.6,64.5 l-3.8,15.9" stroke="#ffffff" stroke-width="2.5" opacity="0.36" fill="none"/>
<path d="M343.4,261.2 l-7.3,22.4" stroke="#ffffff" stroke-width="1.5" opacity="0.34" fill="none"/>
<path d="M241.0,394.5 l-9.4,45.4" stroke="#8080d0" stroke-width="2" opacity="0.13" fill="none"/>
<path d="M419.4,117.5 l-16.0,39.9" stroke="#a0a0dc" stroke-width="2.5" opacity="0.13" fill="none"/>
<path d="M89.7,256.4 l-2.3,11.8" stroke="#8080d0" stroke-width="1" opacity="0.07" fill="none"/>
<path d="M499.7,200.4 l-6.5,16.6" stroke="#a8a8e0" stroke-width="1.5" opacity="0.09" fill="none"/>
<path d="M383.4,134.3 l-5.5,26.4" stroke="#a8a8e0" stroke-width="2" opacity="0.08" fill="none"/>
<path d="M223.8,127.5 l-4.1,18.9" stroke="#a8a8e0" stroke-width="1.5" opacity="0.08" fill="none"/>
<path d="M78.6,253.0 l-10.1,26.4" stroke="#9090d8" stroke-width="2.5" opacity="0.11" fill="none"/>
<path d="M409.3,452.5 l-6.8,30.8" stroke="#a0a0dc" stroke-width="1" opacity="0.12" fill="none"/>
<path d="M498.9,246.9 l-6.5,17.8" stroke="#9090d8" stroke-width="1.5" opacity="0.09" fill="none"/>
<path d="M227.6,118.6 l-7.8,42.2" stroke="#8080d0" stroke-width="1.5" opacity="0.06" fill="none"/>
<path d="M418.1,210.2 l-5.4,12.8" stroke="#a0a0dc" stroke-width="2.5" opacity="0.07" fill="none"/>
<path d="M235.6,453.9 l-4.7,16.5" stroke="#a8a8e0" stroke-width="1.5" opacity="0.10" fill="none"/>
<path d="M136.5,129.3 l-7.2,32.4" stroke="#8080d0" stroke-width="2.5" opacity="0.10" fill="none"/>
<path d="M158.3,142.2 l-8.2,32.7" stroke="#ffffff" stroke-width="1.5" opacity="0.33" fill="none"/>
<path d="M28.1,353.1 l-6.4,29.1" stroke="#ffffff" stroke-width="1" opacity="0.45" fill="none"/>
<path d="M190.7,410.8 l-12.8,42.4" stroke="#ffffff" stroke-width="1" opacity="0.48" fill="none"/>
<path d="M256.9,436.0 l-6.7,18.0" stroke="#9090d8" stroke-width="1.5" opacity="0.07" fill="none"/>
<path d="M203.0,321.9 l-2.3,7.9" stroke="#ffffff" stroke-width="2" opacity="0.27" fill="none"/>
<path d="M199.0,154.2 l-8.4,42.0" stroke="#ffffff" stroke-width="2" opacity="0.44" fill="none"/>
<path d="M56.9,422.3 l-13.9,46.0" stroke="#9090d8" stroke-width="2.5" opacity="0.10" fill="none"/>
<path d="M291.7,56.1 l-16.7,45.7" stroke="#a8a8e0" stroke-width="1.5" opacity="0.07" fill="none"/>
<path d="M144.4,417.1 l-3.4,8.6" stroke="#a0a0dc" stroke-width="1.5" opacity="0.06" fill="none"/>
<path d="M317.4,303.4 l-7.3,29.1" stroke="#a0a0dc" stroke-width="1" opacity="0.13" fill="none"/>
<path d="M373.3,83.1 l-3.8,12.6" stroke="#a0a0dc" stroke-width="2.5" opacity="0.07" fill="none"/>
<path d="M84.8,435.9 l-10.6,28.9" stroke="#a8a8e0" stroke-width="1.5" opacity="0.11" fill="none"/>
<path d="M255.6,218.5 l-18.4,44.2" stroke="#8080d0" stroke-width="2" opacity="0.09" fill="none"/>
<path d="M433.8,283.9 l-4.7,24.2" stroke="#a0a0dc" stroke-width="1.5" opacity="0.09" fill="none"/>
<path d="M436.8,356.8 l-11.9,41.7" stroke="#ffffff" stroke-width="1.5" opacity="0.46" fill="none"/>
<path d="M50.9,268.8 l-9.3,47.3" stroke="#ffffff" stroke-width="1.5" opacity="0.42" fill="none"/>
<path d="M28.2,109.4 l-5.1,15.0" stroke="#ffffff" stroke-width="1.5" opacity="0.42" fill="none"/>
<path d="M132.7,238.8 l-4.4,24.3" stroke="#8080d0" stroke-width="2" opacity="0.06" fill="none"/>
<path d="M501.3,483.8 l-2.0,9.5" stroke="#a0a0dc" stroke-width="2.5" opacity="0.13" fill="none"/>
<path d="M333.5,320.8 l-15.9,38.7" stroke="#a0a0dc" stroke-width="1" opacity="0.07" fill="none"/>
<path d="M28.5,167.3 l-3.5,9.0" stroke="#8080d0" stroke-width="1.5" opacity="0.07" fill="none"/>
<path d="M54.2,459.5 l-9.3,45.7" stroke="#ffffff" stroke-width="1" opacity="0.40" fill="none"/>
<path d="M479.6,244.8 l-6.0,28.9" stroke="#ffffff" stroke-width="2" opacity="0.32" fill="none"/>
<path d="M142.6,92.7 l-6.6,30.2" stroke="#8080d0" stroke-width="2.5" opacity="0.11" fill="none"/>
<path d="M344.3,138.4 l-11.2,36.1" stroke="#a0a0dc" stroke-width="2.5" opacity="0.11" fill="none"/>
<path d="M252.9,195.0 l-6.3,17.1" stroke="#ffffff" stroke-width="2.5" opacity="0.35" fill="none"/>
<path d="M309.4,64.0 l-4.8,22.3" stroke="#a0a0dc" stroke-width="1.5" opacity="0.10" fill="none"/>
<path d="M268.9,169.1 l-16.3,46.7" stroke="#a8a8e0" stroke-width="1" opacity="0.10" fill="none"/>
<path d="M322.0,202.6 l-10.1,34.2" stroke="#a0a0dc" stroke-width="2" opacity="0.12" fill="none"/>
<path d="M79.2,143.4 l-11.4,46.9" stroke="#ffffff" stroke-width="1.5" opacity="0.33" fill="none"/>
<path d="M196.3,343.8 l-7.2,33.1" stroke="#9090d8" stroke-width="2.5" opacity="0.12" fill="none"/>
<path d="M387.4,383.0 l-6.3,27.2" stroke="#ffffff" stroke-width="1.5" opacity="0.47" fill="none"/>
<path d="M26.8,383.6 l-9.4,31.2" stroke="#a8a8e0" stroke-width="2.5" opacity="0.09" fill="none"/>
<path d="M409.2,429.4 l-10.5,31.8" stroke="#8080d0" stroke-width="2" opacity="0.10" fill="none"/>
<path d="M377.7,184.2 l-6.7,23.5" stroke="#8080d0" stroke-width="2" opacity="0.09" fill="none"/>
<path d="M410.0,421.5 l-8.7,27.7" stroke="#ffffff" stroke-width="1.5" opacity="0.33" fill="none"/>
<path d="M97.1,302.4 l-12.0,30.1" stroke="#a0a0dc" stroke-width="1.5" opacity="0.14" fill="none"/>
<path d="M320.0,163.7 l-4.0,21.3" stroke="#9090d8" stroke-width="1" opacity="0.06" fill="none"/>
<path d="M302.1,261.1 l-10.6,45.4" stroke="#ffffff" stroke-width="2.5" opacity="0.50" fill="none"/>
<path d="M279.3,274.9 l-11.4,35.0" stroke="#9090d8" stroke-width="1.5" opacity="0.11" fill="none"/>
<path d="M197.2,460.1 l-10.3,34.9" stroke="#ffffff" stroke-width="1" opacity="0.34" fill="none"/>
<path d="M219.7,295.7 l-6.6,31.4" stroke="#ffffff" stroke-width="2" opacity="0.35" fill="none"/>
<path d="M400.0,440.8 l-8.0,31.7" stroke="#a8a8e0" stroke-width="1" opacity="0.09" fill="none"/>
<path d="M203.4,92.4 l-7.4,19.7" stroke="#8080d0" stroke-width="1.5" opacity="0.09" fill="none"/>
<path d="M484.7,265.3 l-12.7,47.1" stroke="#a0a0dc" stroke-width="2.5" opacity="0.13" fill="none"/>
<path d="M126.6,442.3 l-9.5,23.5" stroke="#ffffff" stroke-width="2.5" opacity="0.28" fill="none"/>
<path d="M304.0,322.9 l-9.4,37.2" stroke="#9090d8" stroke-width="1" opacity="0.08" fill="none"/>
<path d="M360.7,61.5 l-4.4,20.3" stroke="#9090d8" stroke-width="2.5" opacity="0.11" fill="none"/>
<path d="M121.6,269.4 l-10.5,29.4" stroke="#ffffff" stroke-width="2.5" opacity="0.50" fill="none"/>
<path d="M303.8,240.7 l-4.7,12.2" stroke="#9090d8" stroke-width="2.5" opacity="0.06" fill="none"/>
<path d="M61.5,463.9 l-8.4,27.3" stroke="#9090d8" stroke-width="2" opacity="0.11" fill="none"/>
<path d="M357.8,312.3 l-4.8,13.2" stroke="#a8a8e0" stroke-width="1.5" opacity="0.06" fill="none"/>
<path d="M337.0,417.4 l-17.9,44.3" stroke="#ffffff" stroke-width="1.5" opacity="0.41" fill="none"/>
<path d="M32.4,152.6 l-5.7,24.0" stroke="#ffffff" stroke-width="1" opacity="0.26" fill="none"/>
<path d="M138.7,158.8 l-4.0,14.2" stroke="#a0a0dc" stroke-width="1.5" opacity="0.06" fill="none"/>
<path d="M449.1,253.8 l-8.7,24.1" stroke="#9090d8" stroke-width="2" opacity="0.08" fill="none"/>
<path d="M213.8,370.8 l-5.7,16.3" stroke="#9090d8" stroke-width="2" opacity="0.12" fill="none"/>
<path d="M143.3,133.8 l-8.1,21.6" stroke="#ffffff" stroke-width="1.5" opacity="0.39" fill="none"/>
<path d="M80.0,288.0 l-7.4,23.0" stroke="#9090d8" stroke-width="1" opacity="0.09" fill="none"/>
<path d="M470.9,296.6 l-7.1,23.2" stroke="#a8a8e0" stroke-width="1.5" opacity="0.09" fill="none"/>
<path d="M163.9,61.2 l-14.2,39.3" stroke="#9090d8" stroke-width="1.5" opacity="0.08" fill="none"/>
<path d="M291.6,393.6 l-9.2,29.9" stroke="#a8a8e0" stroke-width="1.5" opacity="0.09" fill="none"/>
<path d="M130.7,227.6 l-9.3,33.2" stroke="#ffffff" stroke-width="1.5" opacity="0.38" fill="none"/>
<path d="M133.0,258.1 l-3.3,13.1" stroke="#ffffff" stroke-width="1.5" opacity="0.47" fill="none"/>
<path d="M310.3,219.4 l-4.8,17.7" stroke="#a8a8e0" stroke-width="1.5" opacity="0.13" fill="none"/>
<path d="M85.3,276.1 l-10.3,29.0" stroke="#9090d8" stroke-width="2" opacity="0.11" fill="none"/>
<path d="M302.7,192.3 l-9.0,22.6" stroke="#a8a8e0" stroke-width="1.5" opacity="0.09" fill="none"/>
<path d="M349.7,101.9 l-10.0,30.0" stroke="#a0a0dc" stroke-width="2.5" opacity="0.08" fill="none"/>
<path d="M374.4,98.0 l-4.4,19.6" stroke="#a0a0dc" stroke-width="2" opacity="0.09" fill="none"/>
<path d="M438.2,253.1 l-8.9,33.2" stroke="#a0a0dc" stroke-width="1.5" opacity="0.07" fill="none"/>
<path d="M203.3,395.6 l-7.4,36.3" stroke="#8080d0" stroke-width="1" opacity="0.12" fill="none"/>
<path d="M249.1,487.8 l-4.9,24.3" stroke="#a8a8e0" stroke-width="1" opacity="0.08" fill="none"/>
<path d="M154.9,323.5 l-4.3,16.7" stroke="#9090d8" stroke-width="2" opacity="0.11" fill="none"/>
<path d="M232.8,388.4 l-3.4,14.1" stroke="#a0a0dc" stroke-width="2.5" opacity="0.11" fill="none"/>
<path d="M483.9,304.3 l-5.1,16.8" stroke="#a0a0dc" stroke-width="2.5" opacity="0.13" fill="none"/>
<path d="M357.0,295.4 l-17.3,44.0" stroke="#9090d8" stroke-width="1.5" opacity="0.13" fill="none"/>
<path d="M312.8,345.6 l-12.2,47.4" stroke="#a0a0dc" stroke-width="1" opacity="0.08" fill="none"/>
<path d="M469.5,386.7 l-2.9,11.3" stroke="#8080d0" stroke-width="2" opacity="0.11" fill="none"/>
<path d="M130.3,285.6 l-4.3,22.3" stroke="#a0a0dc" stroke-width="2" opacity="0.12" fill="none"/>
<path d="M387.0,410.5 l-10.2,32.8" stroke="#8080d0" stroke-width="1" opacity="0.12" fill="none"/>
<path d="M238.4,268.2 l-17.0,43.8" stroke="#9090d8" stroke-width="1.5" opacity="0.14" fill="none"/>
<path d="M427.1,303.3 l-5.5,14.3" stroke="#ffffff" stroke-width="1.5" opacity="0.32" fill="none"/>
<path d="M496.3,131.8 l-8.3,21.0" stroke="#a8a8e0" stroke-width="1.5" opacity="0.07" fill="none"/>
<path d="M369.5,349.8 l-6.1,16.9" stroke="#8080d0" stroke-width="2.5" opacity="0.10" fill="none"/>
<path d="M480.7,211.1 l-4.2,20.1" stroke="#ffffff" stroke-width="1.5" opacity="0.39" fill="none"/>
<path d="M187.0,405.5 l-7.2,30.2" stroke="#8080d0" stroke-width="1.5" opacity="0.11" fill="none"/>
<path d="M317.7,248.7 l-8.7,39.2" stroke="#8080d0" stroke-width="1" opacity="0.08" fill="none"/>
<path d="M198.4,153.8 l-3.5,9.9" stroke="#9090d8" stroke-width="1.5" opacity="0.12" fill="none"/>
<path d="M242.7,108.2 l-6.4,20.7" stroke="#a0a0dc" stroke-width="1.5" opacity="0.07" fill="none"/>
<path d="M61.0,50.5 l-11.6,48.3" stroke="#8080d0" stroke-width="1" opacity="0.12" fill="none"/>
<path d="M502.1,306.4 l-3.6,12.0" stroke="#ffffff" stroke-width="2" opacity="0.30" fill="none"/>
<path d="M292.1,51.0 l-12.0,45.1" stroke="#8080d0" stroke-width="2.5" opacity="0.11" fill="none"/>
<path d="M145.8,169.4 l-5.3,12.8" stroke="#a8a8e0" stroke-width="2" opacity="0.08" fill="none"/>
<path d="M115.2,323.0 l-8.4,42.7" stroke="#9090d8" stroke-width="1.5" opacity="0.12" fill="none"/>
<path d="M430.7,379.0 l-7.6,20.3" stroke="#a0a0dc" stroke-width="1.5" opacity="0.08" fill="none"/>
<path d="M94.1,445.2 l-14.6,40.6" stroke="#9090d8" stroke-width="1" opacity="0.07" fill="none"/>
<path d="M421.1,442.3 l-15.4,47.6" stroke="#a8a8e0" stroke-width="1" opacity="0.10" fill="none"/>
<path d="M267.5,127.8 l-5.6,19.8" stroke="#a8a8e0" stroke-width="1" opacity="0.12" fill="none"/>
<path d="M109.2,237.9 l-18.0,45.3" stroke="#ffffff" stroke-width="1" opacity="0.37" fill="none"/>
<path d="M128.2,225.7 l-2.5,9.0" stroke="#ffffff" stroke-width="2.5" opacity="0.29" fill="none"/>
<path d="M59.1,75.2 l-7.6,37.1" stroke="#ffffff" stroke-width="1" opacity="0.25" fill="none"/>
<path d="M494.5,127.5 l-12.0,36.5" stroke="#ffffff" stroke-width="1" opacity="0.45" fill="none"/>
<path d="M354.7,300.7 l-7.7,26.6" stroke="#ffffff" stroke-width="2.5" opacity="0.36" fill="none"/>
<path d="M284.2,332.2 l-4.5,13.8" stroke="#ffffff" stroke-width="2.5" opacity="0.27" fill="none"/>
<path d="M419.5,370.2 l-5.6,21.2" stroke="#ffffff" stroke-width="2.5" opacity="0.36" fill="none"/>
<path d="M202.1,345.6 l-2.9,13.4" stroke="#8080d0" stroke-width="2.5" opacity="0.06" fill="none"/>
<path d="M117.5,349.4 l-9.9,24.9" stroke="#a0a0dc" stroke-width="2.5" opacity="0.10" fill="none"/>
<path d="M484.9,216.2 l-5.4,17.3" stroke="#9090d8" stroke-width="1.5" opacity="0.08" fill="none"/>
<path d="M501.4,138.7 l-13.6,37.1" stroke="#8080d0" stroke-width="1.5" opacity="0.07" fill="none"/>
<path d="M284.0,164.4 l-7.9,27.4" stroke="#ffffff" stroke-width="1.5" opacity="0.39" fill="none"/>
<path d="M81.5,275.5 l-12.2,30.4" stroke="#8080d0" stroke-width="2" opacity="0.07" fill="none"/>
<path d="M239.1,426.2 l-7.5,30.2" stroke="#8080d0" stroke-width="1" opacity="0.14" fill="none"/>
<path d="M380.2,93.5 l-13.3,40.8" stroke="#a8a8e0" stroke-width="1.5" opacity="0.11" fill="none"/>
<path d="M407.4,110.0 l-15.3,37.6" stroke="#9090d8" stroke-width="1.5" opacity="0.09" fill="none"/>
<path d="M30.2,317.5 l-5.6,16.0" stroke="#ffffff" stroke-width="1.5" opacity="0.48" fill="none"/>
<path d="M66.0,487.4 l-6.0,15.3" stroke="#a8a8e0" stroke-width="1.5" opacity="0.09" fill="none"/>
<path d="M439.8,397.8 l-15.0,35.9" stroke="#9090d8" stroke-width="1.5" opacity="0.08" fill="none"/>
<path d="M274.8,284.6 l-6.7,22.0" stroke="#a0a0dc" stroke-width="2.5" opacity="0.07" fill="none"/>
<path d="M290.2,409.0 l-2.5,12.5" stroke="#a0a0dc" stroke-width="1.5" opacity="0.09" fill="none"/>
<path d="M367.5,55.5 l-14.9,47.2" stroke="#ffffff" stroke-width="1" opacity="0.28" fill="none"/>
<path d="M417.5,134.9 l-10.3,29.5" stroke="#a8a8e0" stroke-width="2" opacity="0.11" fill="none"/>
<path d="M149.3,480.0 l-13.4,37.7" stroke="#9090d8" stroke-width="2" opacity="0.06" fill="none"/>
<path d="M512.7,266.4 l-10.8,26.2" stroke="#9090d8" stroke-width="1" opacity="0.07" fill="none"/>
<path d="M424.5,350.5 l-7.2,23.4" stroke="#8080d0" stroke-width="1.5" opacity="0.13" fill="none"/>
<path d="M219.0,429.8 l-12.5,31.2" stroke="#ffffff" stroke-width="1.5" opacity="0.30" fill="none"/>
<path d="M459.8,318.8 l-3.5,9.2" stroke="#8080d0" stroke-width="1.5" opacity="0.10" fill="none"/>
<path d="M307.2,226.2 l-8.8,21.1" stroke="#ffffff" stroke-width="2.5" opacity="0.33" fill="none"/>
<path d="M39.4,244.7 l-18.7,45.7" stroke="#8080d0" stroke-width="1.5" opacity="0.11" fill="none"/>
<path d="M158.5,173.9 l-9.8,27.3" stroke="#ffffff" stroke-width="2.5" opacity="0.38" fill="none"/>
<path d="M490.2,492.1 l-2.6,9.1" stroke="#a8a8e0" stroke-width="1" opacity="0.12" fill="none"/>
<path d="M334.1,331.9 l-7.7,21.9" stroke="#a8a8e0" stroke-width="1.5" opacity="0.11" fill="none"/>
<path d="M174.5,379.5 l-11.2,37.4" stroke="#a0a0dc" stroke-width="1.5" opacity="0.13" fill="none"/>
<path d="M375.4,195.6 l-9.4,36.4" stroke="#ffffff" stroke-width="2" opacity="0.34" fill="none"/>
<path d="M143.4,160.4 l-8.2,21.1" stroke="#8080d0" stroke-width="1" opacity="0.10" fill="none"/>
<path d="M242.0,304.9 l-7.3,19.4" stroke="#a8a8e0" stroke-width="1" opacity="0.08" fill="none"/>
<path d="M174.1,367.2 l-6.0,30.6" stroke="#9090d8" stroke-width="1.5" opacity="0.13" fill="none"/>
<path d="M307.9,96.9 l-4.2,14.9" stroke="#a0a0dc" stroke-width="2" opacity="0.14" fill="none"/>
<path d="M363.2,357.3 l-10.0,45.6" stroke="#a8a8e0" stroke-width="1.5" opacity="0.08" fill="none"/>
<path d="M148.7,72.9 l-5.0,14.0" stroke="#a8a8e0" stroke-width="1" opacity="0.06" fill="none"/>
<path d="M242.3,444.4 l-5.7,19.0" stroke="#a8a8e0" stroke-width="1" opacity="0.08" fill="none"/>
<path d="M49.7,120.8 l-3.7,9.3" stroke="#a0a0dc" stroke-width="2.5" opacity="0.12" fill="none"/>
<path d="M29.2,170.2 l-13.4,32.3" stroke="#9090d8" stroke-width="1.5" opacity="0.08" fill="none"/>
<path d="M185.5,375.4 l-10.8,33.6" stroke="#a8a8e0" stroke-width="1.5" opacity="0.06" fill="none"/>
<path d="M228.5,73.3 l-11.0,32.5" stroke="#ffffff" stroke-width="2" opacity="0.35" fill="none"/>
<path d="M482.2,441.2 l-3.0,8.6" stroke="#9090d8" stroke-width="1.5" opacity="0.09" fill="none"/>
<path d="M370.8,422.3 l-5.6,13.5" stroke="#a8a8e0" stroke-width="1.5" opacity="0.10" fill="none"/>
<path d="M435.6,212.9 l-7.4,22.0" stroke="#ffffff" stroke-width="2.5" opacity="0.29" fill="none"/>
<path d="M503.2,308.7 l-4.6,17.0" stroke="#9090d8" stroke-width="2" opacity="0.12" fill="none"/>
<path d="M178.8,378.8 l-14.6,46.8" stroke="#a0a0dc" stroke-width="1.5" opacity="0.10" fill="none"/>
<path d="M482.3,122.7 l-2.5,8.0" stroke="#a8a8e0" stroke-width="1.5" opacity="0.14" fill="none"/>
<path d="M134.1,389.9 l-4.5,10.9" stroke="#9090d8" stroke-width="1.5" opacity="0.06" fill="none"/>
<path d="M267.4,301.1 l-3.0,15.3" stroke="#8080d0" stroke-width="1.5" opacity="0.07" fill="none"/>
<path d="M115.3,365.4 l-16.6,43.6" stroke="#a0a0dc" stroke-width="1" opacity="0.12" fill="none"/>
<path d="M142.6,478.4 l-7.5,28.0" stroke="#ffffff" stroke-width="1.5" opacity="0.37" fill="none"/>
<path d="M180.2,452.4 l-3.0,12.2" stroke="#8080d0" stroke-width="1" opacity="0.13" fill="none"/>
<path d="M353.1,212.4 l-5.5,16.7" stroke="#8080d0" stroke-width="2" opacity="0.11" fill="none"/>
<path d="M132.7,169.3 l-5.7,18.1" stroke="#a0a0dc" stroke-width="1.5" opacity="0.08" fill="none"/>
<path d="M393.8,336.3 l-3.7,20.2" stroke="#ffffff" stroke-width="1.5" opacity="0.45" fill="none"/>
<path d="M257.7,451.8 l-7.6,39.6" stroke="#a0a0dc" stroke-width="1.5" opacity="0.08" fill="none"/>
<path d="M190.5,257.6 l-16.2,42.4" stroke="#ffffff" stroke-width="2.5" opacity="0.49" fill="none"/>
<path d="M128.2,72.4 l-8.6,39.9" stroke="#9090d8" stroke-width="1.5" opacity="0.12" fill="none"/>
<path d="M447.0,126.6 l-7.9,43.6" stroke="#8080d0" stroke-width="1.5" opacity="0.06" fill="none"/>
<path d="M75.5,484.8 l-1.7,8.2" stroke="#ffffff" stroke-width="1.5" opacity="0.43" fill="none"/>
<path d="M74.6,125.5 l-13.6,34.1" stroke="#8080d0" stroke-width="1.5" opacity="0.13" fill="none"/>
<path d="M380.4,426.5 l-18.7,45.4" stroke="#a8a8e0" stroke-width="1.5" opacity="0.12" fill="none"/>
<path d="M362.8,72.6 l-10.0,27.4" stroke="#8080d0" stroke-width="2" opacity="0.07" fill="none"/>
<path d="M31.9,485.6 l-4.4,20.8" stroke="#ffffff" stroke-width="1" opacity="0.49" fill="none"/>
<path d="M279.9,62.7 l-4.9,16.7" stroke="#ffffff" stroke-width="2.5" opacity="0.50" fill="none"/>
<path d="M288.6,408.6 l-18.0,44.7" stroke="#a8a8e0" stroke-width="1.5" opacity="0.12" fill="none"/>
<path d="M157.3,137.3 l-7.2,17.7" stroke="#a8a8e0" stroke-width="1" opacity="0.10" fill="none"/>
<path d="M224.5,298.6 l-8.9,21.4" stroke="#8080d0" stroke-width="1" opacity="0.10" fill="none"/>
<path d="M160.5,199.8 l-4.5,24.8" stroke="#ffffff" stroke-width="1.5" opacity="0.36" fill="none"/>
<path d="M286.3,227.7 l-3.3,14.0" stroke="#a8a8e0" stroke-width="2" opacity="0.13" fill="none"/>
<path d="M333.8,158.5 l-5.2,28.6" stroke="#8080d0" stroke-width="2.5" opacity="0.09" fill="none"/>
<path d="M139.3,149.0 l-2.7,12.6" stroke="#8080d0" stroke-width="1" opacity="0.06" fill="none"/>
<path d="M365.0,192.6 l-9.7,33.8" stroke="#ffffff" stroke-width="1.5" opacity="0.49" fill="none"/>
<path d="M26.7,369.9 l-12.5,42.0" stroke="#ffffff" stroke-width="2.5" opacity="0.50" fill="none"/>
<path d="M141.0,322.1 l-12.3,37.3" stroke="#ffffff" stroke-width="1" opacity="0.49" fill="none"/>
<path d="M158.5,333.8 l-16.0,39.6" stroke="#8080d0" stroke-width="2.5" opacity="0.08" fill="none"/>
<path d="M326.9,161.8 l-13.5,44.1" stroke="#ffffff" stroke-width="1.5" opacity="0.40" fill="none"/>
<path d="M300.9,494.5 l-2.5,10.5" stroke="#ffffff" stroke-width="1.5" opacity="0.30" fill="none"/>
<path d="M109.4,210.3 l-13.0,33.9" stroke="#a8a8e0" stroke-width="2" opacity="0.11" fill="none"/>
<path d="M433.9,433.9 l-16.8,41.1" stroke="#a0a0dc" stroke-width="2" opacity="0.13" fill="none"/>
<path d="M423.2,116.1 l-4.9,13.6" stroke="#a0a0dc" stroke-width="1" opacity="0.09" fill="none"/>
<path d="M418.6,281.6 l-10.0,25.1" stroke="#a0a0dc" stroke-width="2" opacity="0.14" fill="none"/>
<path d="M363.7,249.5 l-6.3,27.4" stroke="#a8a8e0" stroke-width="2.5" opacity="0.06" fill="none"/>
<path d="M88.6,262.9 l-9.3,34.5" stroke="#a0a0dc" stroke-width="2.5" opacity="0.12" fill="none"/>
<path d="M145.3,305.4 l-2.7,7.6" stroke="#a8a8e0" stroke-width="2.5" opacity="0.08" fill="none"/>
<path d="M290.0,455.5 l-6.3,17.6" stroke="#9090d8" stroke-width="2" opacity="0.10" fill="none"/>
<path d="M263.0,101.6 l-2.5,13.2" stroke="#ffffff" stroke-width="1.5" opacity="0.45" fill="none"/>
<path d="M475.6,367.5 l-9.0,22.0" stroke="#ffffff" stroke-width="1.5" opacity="0.36" fill="none"/>
<path d="M319.5,171.6 l-3.8,17.6" stroke="#ffffff" stroke-width="1.5" opacity="0.30" fill="none"/>
<path d="M499.0,364.7 l-6.0,22.9" stroke="#9090d8" stroke-width="1.5" opacity="0.07" fill="none"/>
<path d="M240.7,226.6 l-4.9,24.9" stroke="#9090d8" stroke-width="1" opacity="0.11" fill="none"/>
<path d="M253.2,248.1 l-13.2,41.2" stroke="#a8a8e0" stroke-width="2" opacity="0.13" fill="none"/>
<path d="M238.7,266.8 l-6.4,28.8" stroke="#8080d0" stroke-width="1.5" opacity="0.08" fill="none"/>
<path d="M288.7,458.5 l-6.6,19.3" stroke="#ffffff" stroke-width="2" opacity="0.28" fill="none"/>
<path d="M135.9,83.5 l-15.6,39.4" stroke="#a8a8e0" stroke-width="1" opacity="0.11" fill="none"/>
<path d="M52.5,344.7 l-11.0,36.2" stroke="#ffffff" stroke-width="1" opacity="0.42" fill="none"/>
<path d="M230.2,296.7 l-10.9,48.7" stroke="#a0a0dc" stroke-width="1.5" opacity="0.09" fill="none"/>
<path d="M282.2,49.2 l-16.5,46.7" stroke="#9090d8" stroke-width="1.5" opacity="0.09" fill="none"/>
<path d="M149.4,424.3 l-8.9,30.0" stroke="#8080d0" stroke-width="2" opacity="0.06" fill="none"/>
<path d="M173.6,422.3 l-8.7,40.8" stroke="#a0a0dc" stroke-width="1.5" opacity="0.08" fill="none"/>
<path d="M49.0,289.5 l-7.0,22.6" stroke="#8080d0" stroke-width="2" opacity="0.11" fill="none"/>
<path d="M200.8,406.6 l-3.2,16.1" stroke="#8080d0" stroke-width="2.5" opacity="0.06" fill="none"/>
<path d="M177.4,287.1 l-6.9,24.2" stroke="#9090d8" stroke-width="1.5" opacity="0.08" fill="none"/>
<path d="M414.3,176.9 l-8.4,36.9" stroke="#ffffff" stroke-width="2.5" opacity="0.36" fill="none"/>
<path d="M486.5,240.5 l-16.9,41.6" stroke="#8080d0" stroke-width="2" opacity="0.07" fill="none"/>
<path d="M93.2,428.2 l-12.2,40.4" stroke="#8080d0" stroke-width="1" opacity="0.10" fill="none"/>
<path d="M416.9,266.7 l-9.1,35.2" stroke="#a8a8e0" stroke-width="1.5" opacity="0.10" fill="none"/>
<path d="M103.3,386.1 l-10.8,36.5" stroke="#9090d8" stroke-width="2" opacity="0.08" fill="none"/>
<path d="M66.7,83.1 l-3.7,17.0" stroke="#8080d0" stroke-width="2" opacity="0.09" fill="none"/>
<path d="M447.8,460.9 l-4.8,12.7" stroke="#a0a0dc" stroke-width="2" opacity="0.12" fill="none"/>
<path d="M453.1,394.5 l-9.1,36.6" stroke="#a0a0dc" stroke-width="1.5" opacity="0.09" fill="none"/>
<path d="M436.0,114.9 l-7.6,40.9" stroke="#9090d8" stroke-width="2" opacity="0.09" fill="none"/>
<path d="M100.8,177.9 l-8.7,34.4" stroke="#ffffff" stroke-width="1.5" opacity="0.29" fill="none"/>
<path d="M114.9,201.8 l-9.4,23.0" stroke="#9090d8" stroke-width="1.5" opacity="0.11" fill="none"/>
<path d="M128.7,338.2 l-11.2,27.8" stroke="#a0a0dc" stroke-width="2" opacity="0.06" fill="none"/>
<path d="M411.0,430.7 l-16.2,43.4" stroke="#a0a0dc" stroke-width="1.5" opacity="0.11" fill="none"/>
<path d="M287.3,101.5 l-4.6,13.1" stroke="#ffffff" stroke-width="1.5" opacity="0.48" fill="none"/>
<path d="M43.7,304.4 l-15.5,46.1" stroke="#8080d0" stroke-width="1.5" opacity="0.08" fill="none"/>
<path d="M108.8,207.3 l-9.1,26.7" stroke="#a8a8e0" stroke-width="1.5" opacity="0.07" fill="none"/>
<path d="M433.4,399.5 l-11.4,36.7" stroke="#9090d8" stroke-width="2.5" opacity="0.12" fill="none"/>
<path d="M313.2,263.9 l-2.7,9.0" stroke="#ffffff" stroke-width="1" opacity="0.41" fill="none"/>
<path d="M88.2,307.7 l-7.2,21.7" stroke="#a0a0dc" stroke-width="1.5" opacity="0.07" fill="none"/>
<path d="M485.8,191.4 l-8.9,42.4" stroke="#a0a0dc" stroke-width="2" opacity="0.07" fill="none"/>
<path d="M67.9,441.8 l-3.7,12.4" stroke="#ffffff" stroke-width="2.5" opacity="0.28" fill="none"/>
<path d="M253.6,125.9 l-8.7,29.2" stroke="#a8a8e0" stroke-width="1.5" opacity="0.08" fill="none"/>
<path d="M297.6,472.4 l-11.0,44.8" stroke="#ffffff" stroke-width="2.5" opacity="0.31" fill="none"/>
<path d="M67.7,110.5 l-2.3,10.0" stroke="#a8a8e0" stroke-width="2.5" opacity="0.12" fill="none"/>
<path d="M134.8,385.7 l-4.9,13.6" stroke="#ffffff" stroke-width="1" opacity="0.35" fill="none"/>
<path d="M282.3,174.5 l-16.9,42.2" stroke="#a8a8e0" stroke-width="2.5" opacity="0.08" fill="none"/>
<path d="M318.8,389.6 l-14.2,35.1" stroke="#9090d8" stroke-width="1.5" opacity="0.11" fill="none"/>
<path d="M505.8,71.3 l-8.4,32.9" stroke="#a0a0dc" stroke-width="1.5" opacity="0.07" fill="none"/>
<path d="M394.5,317.1 l-5.1,14.8" stroke="#ffffff" stroke-width="2" opacity="0.26" fill="none"/>
<path d="M411.7,119.9 l-10.5,27.6" stroke="#a8a8e0" stroke-width="1.5" opacity="0.08" fill="none"/>
<path d="M480.3,347.5 l-14.1,35.0" stroke="#ffffff" stroke-width="1" opacity="0.26" fill="none"/>
<path d="M279.0,206.6 l-2.9,10.5" stroke="#a8a8e0" stroke-width="1" opacity="0.13" fill="none"/>
<path d="M47.9,215.0 l-6.4,24.4" stroke="#ffffff" stroke-width="1.5" opacity="0.29" fill="none"/>
<path d="M500.3,340.9 l-14.2,36.7" stroke="#9090d8" stroke-width="1.5" opacity="0.12" fill="none"/>
<path d="M432.8,399.3 l-9.9,31.3" stroke="#a0a0dc" stroke-width="2.5" opacity="0.12" fill="none"/>
<path d="M317.3,335.7 l-12.9,32.1" stroke="#a8a8e0" stroke-width="1.5" opacity="0.08" fill="none"/>
<path d="M314.0,289.9 l-12.2,43.2" stroke="#ffffff" stroke-width="1" opacity="0.42" fill="none"/>
<path d="M219.9,320.3 l-13.0,38.4" stroke="#ffffff" stroke-width="2" opacity="0.49" fill="none"/>
<path d="M137.1,339.0 l-10.4,39.9" stroke="#a0a0dc" stroke-width="2" opacity="0.06" fill="none"/>
<path d="M261.0,70.9 l-2.8,12.3" stroke="#ffffff" stroke-width="2" opacity="0.40" fill="none"/>
<path d="M246.9,206.2 l-5.4,16.1" stroke="#ffffff" stroke-width="2" opacity="0.26" fill="none"/>
<path d="M186.2,489.0 l-3.2,15.5" stroke="#8080d0" stroke-width="2" opacity="0.10" fill="none"/>
<path d="M143.8,146.7 l-10.8,32.6" stroke="#ffffff" stroke-width="1.5" opacity="0.32" fill="none"/>
<path d="M491.0,217.3 l-3.5,17.1" stroke="#ffffff" stroke-width="2.5" opacity="0.33" fill="none"/>
<path d="M181.5,426.9 l-10.9,39.7" stroke="#ffffff" stroke-width="1.5" opacity="0.38" fill="none"/>
<path d="M27.3,122.6 l-14.2,45.5" stroke="#8080d0" stroke-width="1.5" opacity="0.09" fill="none"/>
<path d="M75.7,286.5 l-12.6,42.4" stroke="#a8a8e0" stroke-width="2" opacity="0.13" fill="none"/>
<path d="M459.4,351.1 l-2.9,10.8" stroke="#a0a0dc" stroke-width="2" opacity="0.14" fill="none"/>
<path d="M202.7,337.9 l-10.8,32.8" stroke="#8080d0" stroke-width="2.5" opacity="0.06" fill="none"/>
<path d="M347.9,265.0 l-14.2,34.2" stroke="#ffffff" stroke-width="1" opacity="0.34" fill="none"/>
<path d="M174.4,283.4 l-3.8,13.9" stroke="#9090d8" stroke-width="2" opacity="0.14" fill="none"/>
<path d="M264.3,50.7 l-15.8,44.6" stroke="#ffffff" stroke-width="1.5" opacity="0.48" fill="none"/>
<path d="M271.0,491.6 l-4.1,14.7" stroke="#8080d0" stroke-width="1.5" opacity="0.12" fill="none"/>
<path d="M165.0,291.4 l-4.7,25.2" stroke="#8080d0" stroke-width="1" opacity="0.11" fill="none"/>
<path d="M263.9,477.7 l-4.6,22.7" stroke="#a8a8e0" stroke-width="1.5" opacity="0.13" fill="none"/>
<path d="M266.0,75.9 l-6.1,29.7" stroke="#ffffff" stroke-width="1.5" opacity="0.45" fill="none"/>
<path d="M53.9,188.0 l-7.4,28.9" stroke="#ffffff" stroke-width="1" opacity="0.32" fill="none"/>
<path d="M216.2,463.1 l-17.0,45.3" stroke="#ffffff" stroke-width="1.5" opacity="0.30" fill="none"/>
<path d="M179.4,252.6 l-4.2,11.8" stroke="#a0a0dc" stroke-width="2" opacity="0.09" fill="none"/>
<path d="M493.8,176.6 l-3.3,16.2" stroke="#ffffff" stroke-width="2" opacity="0.46" fill="none"/>
<path d="M336.0,394.9 l-7.6,19.8" stroke="#ffffff" stroke-width="2.5" opacity="0.42" fill="none"/>
<path d="M437.3,241.7 l-3.5,10.7" stroke="#ffffff" stroke-width="2" opacity="0.45" fill="none"/>
<path d="M442.4,109.7 l-10.4,24.8" stroke="#8080d0" stroke-width="2.5" opacity="0.11" fill="none"/>
<path d="M196.5,465.2 l-6.5,18.0" stroke="#ffffff" stroke-width="1" opacity="0.27" fill="none"/>
<path d="M320.6,405.3 l-10.4,41.8" stroke="#a8a8e0" stroke-width="1.5" opacity="0.11" fill="none"/>
<path d="M498.2,324.5 l-8.4,36.1" stroke="#8080d0" stroke-width="2" opacity="0.13" fill="none"/>
<path d="M218.3,274.1 l-4.6,21.7" stroke="#ffffff" stroke-width="1.5" opacity="0.43" fill="none"/>
<path d="M226.2,459.3 l-7.0,18.9" stroke="#ffffff" stroke-width="1" opacity="0.27" fill="none"/>
<path d="M24.2,308.2 l-5.4,17.1" stroke="#ffffff" stroke-width="1.5" opacity="0.43" fill="none"/>
<path d="M412.7,341.8 l-15.9,40.9" stroke="#8080d0" stroke-width="1.5" opacity="0.13" fill="none"/>
<path d="M140.8,114.5 l-7.6,18.4" stroke="#a0a0dc" stroke-width="2" opacity="0.07" fill="none"/>
<path d="M370.6,356.7 l-11.3,31.8" stroke="#ffffff" stroke-width="1" opacity="0.40" fill="none"/>
<path d="M277.0,309.6 l-15.0,43.4" stroke="#8080d0" stroke-width="1.5" opacity="0.11" fill="none"/>
<path d="M456.6,99.5 l-2.5,8.6" stroke="#a0a0dc" stroke-width="1" opacity="0.08" fill="none"/>
<path d="M248.1,385.7 l-7.7,25.6" stroke="#ffffff" stroke-width="2" opacity="0.39" fill="none"/>
<path d="M423.4,67.1 l-15.7,39.8" stroke="#a0a0dc" stroke-width="1.5" opacity="0.11" fill="none"/>
<path d="M192.1,197.4 l-11.0,29.9" stroke="#a0a0dc" stroke-width="1.5" opacity="0.13" fill="none"/>
<path d="M417.3,296.4 l-2.1,9.0" stroke="#ffffff" stroke-width="1" opacity="0.32" fill="none"/>
<path d="M207.1,471.4 l-7.2,18.1" stroke="#ffffff" stroke-width="1" opacity="0.35" fill="none"/>
<path d="M491.4,228.3 l-7.3,35.2" stroke="#a0a0dc" stroke-width="1" opacity="0.14" fill="none"/>
<path d="M183.0,488.8 l-3.2,10.5" stroke="#ffffff" stroke-width="1.5" opacity="0.36" fill="none"/>
<path d="M358.8,361.8 l-8.7,25.7" stroke="#9090d8" stroke-width="1.5" opacity="0.09" fill="none"/>
<path d="M164.0,134.9 l-11.0,37.3" stroke="#a8a8e0" stroke-width="2" opacity="0.12" fill="none"/>
<path d="M386.0,394.5 l-3.8,16.0" stroke="#8080d0" stroke-width="1.5" opacity="0.12" fill="none"/>
<path d="M37.7,372.3 l-13.0,31.2" stroke="#a8a8e0" stroke-width="1.5" opacity="0.09" fill="none"/>
<path d="M434.9,327.0 l-11.0,37.8" stroke="#a0a0dc" stroke-width="2.5" opacity="0.11" fill="none"/>
<path d="M301.2,195.1 l-8.4,21.3" stroke="#8080d0" stroke-width="1.5" opacity="0.09" fill="none"/>
<path d="M465.5,403.3 l-10.0,25.2" stroke="#a8a8e0" stroke-width="1" opacity="0.09" fill="none"/>
<path d="M455.1,273.6 l-3.7,10.9" stroke="#ffffff" stroke-width="1.5" opacity="0.47" fill="none"/>
<path d="M503.5,421.3 l-10.2,28.4" stroke="#a8a8e0" stroke-width="2" opacity="0.09" fill="none"/>
<path d="M344.3,465.5 l-5.4,15.2" stroke="#ffffff" stroke-width="2.5" opacity="0.44" fill="none"/>
<path d="M382.5,117.4 l-13.7,43.5" stroke="#9090d8" stroke-width="1.5" opacity="0.07" fill="none"/>
<path d="M377.7,294.0 l-2.0,8.9" stroke="#ffffff" stroke-width="1" opacity="0.45" fill="none"/>
<path d="M124.8,293.6 l-9.7,45.4" stroke="#ffffff" stroke-width="1.5" opacity="0.39" fill="none"/>
<path d="M255.1,379.4 l-17.7,42.4" stroke="#a0a0dc" stroke-width="1.5" opacity="0.09" fill="none"/>
<path d="M73.3,318.0 l-4.6,12.5" stroke="#ffffff" stroke-width="2" opacity="0.40" fill="none"/>
<path d="M336.8,361.7 l-9.9,24.5" stroke="#ffffff" stroke-width="1" opacity="0.29" fill="none"/>
<path d="M345.4,416.6 l-11.9,48.1" stroke="#8080d0" stroke-width="2" opacity="0.13" fill="none"/>
<path d="M321.4,107.2 l-9.0,27.5" stroke="#a8a8e0" stroke-width="1.5" opacity="0.06" fill="none"/>
<path d="M299.4,382.0 l-4.1,16.9" stroke="#a8a8e0" stroke-width="1" opacity="0.07" fill="none"/>
<path d="M500.1,410.7 l-3.6,8.9" stroke="#a8a8e0" stroke-width="1.5" opacity="0.12" fill="none"/>
<path d="M46.6,293.8 l-9.9,30.7" stroke="#a8a8e0" stroke-width="1" opacity="0.10" fill="none"/>
<path d="M258.7,461.8 l-8.1,39.1" stroke="#a8a8e0" stroke-width="1" opacity="0.07" fill="none"/>
<path d="M282.3,324.5 l-6.2,20.7" stroke="#9090d8" stroke-width="2" opacity="0.07" fill="none"/>
<path d="M36.1,343.2 l-3.2,11.2" stroke="#ffffff" stroke-width="2.5" opacity="0.45" fill="none"/>
<path d="M288.1,356.3 l-9.4,34.5" stroke="#ffffff" stroke-width="2" opacity="0.42" fill="none"/>
<path d="M296.6,152.1 l-4.5,15.2" stroke="#a8a8e0" stroke-width="2" opacity="0.07" fill="none"/>
<path d="M343.3,147.0 l-9.5,24.2" stroke="#ffffff" stroke-width="1" opacity="0.38" fill="none"/>
<path d="M353.9,98.9 l-3.7,17.7" stroke="#9090d8" stroke-width="1" opacity="0.09" fill="none"/>
<path d="M170.2,391.0 l-3.8,13.7" stroke="#a8a8e0" stroke-width="1.5" opacity="0.06" fill="none"/>
<path d="M61.7,101.0 l-9.9,35.7" stroke="#ffffff" stroke-width="2.5" opacity="0.36" fill="none"/>
<path d="M223.1,315.5 l-6.9,34.6" stroke="#9090d8" stroke-width="1" opacity="0.13" fill="none"/>
<path d="M375.0,65.3 l-7.7,35.8" stroke="#9090d8" stroke-width="2" opacity="0.07" fill="none"/>
<path d="M488.3,242.2 l-12.7,35.5" stroke="#a0a0dc" stroke-width="1.5" opacity="0.06" fill="none"/>
<path d="M208.7,132.4 l-2.8,14.6" stroke="#ffffff" stroke-width="2" opacity="0.46" fill="none"/>
<path d="M510.5,384.5 l-6.6,18.4" stroke="#ffffff" stroke-width="2" opacity="0.26" fill="none"/>
<path d="M140.6,429.0 l-15.1,44.2" stroke="#a0a0dc" stroke-width="1.5" opacity="0.12" fill="none"/>
<path d="M287.6,94.9 l-13.9,40.3" stroke="#a0a0dc" stroke-width="1.5" opacity="0.07" fill="none"/>
<path d="M82.9,259.1 l-6.4,15.6" stroke="#a8a8e0" stroke-width="2.5" opacity="0.14" fill="none"/>
<path d="M223.1,444.8 l-6.8,36.3" stroke="#8080d0" stroke-width="1" opacity="0.08" fill="none"/>
<path d="M162.3,455.8 l-2.9,8.1" stroke="#a8a8e0" stroke-width="1" opacity="0.11" fill="none"/>
<path d="M328.9,119.0 l-15.9,45.1" stroke="#a8a8e0" stroke-width="2" opacity="0.09" fill="none"/>
<path d="M496.4,88.0 l-11.4,42.9" stroke="#8080d0" stroke-width="2.5" opacity="0.11" fill="none"/>
<path d="M313.7,336.1 l-8.1,32.1" stroke="#9090d8" stroke-width="1.5" opacity="0.07" fill="none"/>
<path d="M57.0,65.4 l-8.3,21.6" stroke="#8080d0" stroke-width="1" opacity="0.10" fill="none"/>
<path d="M497.3,356.2 l-4.5,19.0" stroke="#9090d8" stroke-width="1.5" opacity="0.08" fill="none"/>
<path d="M214.8,362.1 l-2.7,15.0" stroke="#ffffff" stroke-width="1" opacity="0.34" fill="none"/>
<path d="M435.2,63.1 l-14.7,40.2" stroke="#a0a0dc" stroke-width="1.5" opacity="0.11" fill="none"/>
<path d="M157.6,66.4 l-3.2,15.7" stroke="#8080d0" stroke-width="1.5" opacity="0.11" fill="none"/>
<path d="M174.3,178.4 l-2.9,9.5" stroke="#ffffff" stroke-width="1" opacity="0.31" fill="none"/>
<path d="M65.3,316.0 l-3.5,10.0" stroke="#a8a8e0" stroke-width="1.5" opacity="0.13" fill="none"/>
<path d="M196.6,295.8 l-4.8,14.6" stroke="#a0a0dc" stroke-width="1.5" opacity="0.09" fill="none"/>
<path d="M278.4,109.0 l-4.1,18.0" stroke="#ffffff" stroke-width="1.5" opacity="0.48" fill="none"/>
<path d="M40.0,326.9 l-10.4,44.0" stroke="#a8a8e0" stroke-width="1.5" opacity="0.11" fill="none"/>
<path d="M252.5,439.1 l-2.6,9.8" stroke="#a8a8e0" stroke-width="1.5" opacity="0.08" fill="none"/>
<path d="M253.3,273.5 l-3.5,12.1" stroke="#9090d8" stroke-width="2" opacity="0.09" fill="none"/>
<path d="M264.6,444.9 l-14.0,44.0" stroke="#9090d8" stroke-width="1" opacity="0.08" fill="none"/>
<path d="M153.3,252.3 l-5.8,17.1" stroke="#9090d8" stroke-width="1" opacity="0.10" fill="none"/>
<path d="M260.1,146.3 l-6.0,33.1" stroke="#9090d8" stroke-width="2" opacity="0.06" fill="none"/>
<path d="M235.9,79.7 l-8.5,28.7" stroke="#a8a8e0" stroke-width="1.5" opacity="0.07" fill="none"/>
<path d="M259.3,248.2 l-10.8,46.5" stroke="#9090d8" stroke-width="1.5" opacity="0.12" fill="none"/>
<path d="M331.4,102.5 l-4.4,19.3" stroke="#9090d8" stroke-width="1" opacity="0.12" fill="none"/>
<path d="M256.6,166.5 l-7.6,28.4" stroke="#9090d8" stroke-width="2.5" opacity="0.11" fill="none"/>
<path d="M360.6,66.7 l-8.0,34.3" stroke="#a8a8e0" stroke-width="2.5" opacity="0.11" fill="none"/>
<path d="M96.7,392.4 l-11.2,46.4" stroke="#8080d0" stroke-width="1.5" opacity="0.13" fill="none"/>
<path d="M112.4,151.3 l-6.6,32.4" stroke="#ffffff" stroke-width="1" opacity="0.30" fill="none"/>
<path d="M40.0,252.3 l-4.9,13.0" stroke="#ffffff" stroke-width="1.5" opacity="0.30" fill="none"/>
<path d="M54.8,73.7 l-4.7,14.2" stroke="#a8a8e0" stroke-width="2" opacity="0.07" fill="none"/>
<path d="M208.0,417.9 l-9.8,37.9" stroke="#ffffff" stroke-width="1.5" opacity="0.48" fill="none"/>
<path d="M116.6,262.1 l-4.7,20.5" stroke="#a8a8e0" stroke-width="1.5" opacity="0.14" fill="none"/>
<path d="M392.7,76.3 l-4.7,14.7" stroke="#ffffff" stroke-width="1" opacity="0.34" fill="none"/>
<path d="M100.5,422.2 l-2.1,7.7" stroke="#ffffff" stroke-width="1.5" opacity="0.36" fill="none"/>
<path d="M297.7,369.6 l-4.7,13.0" stroke="#a0a0dc" stroke-width="1" opacity="0.14" fill="none"/>
<path d="M97.1,114.5 l-8.1,28.8" stroke="#a8a8e0" stroke-width="1" opacity="0.08" fill="none"/>
<path d="M106.2,309.0 l-8.3,25.7" stroke="#8080d0" stroke-width="2.5" opacity="0.08" fill="none"/>
<path d="M99.8,366.5 l-11.8,47.2" stroke="#9090d8" stroke-width="1" opacity="0.09" fill="none"/>
<path d="M430.2,464.7 l-17.2,42.6" stroke="#a8a8e0" stroke-width="1.5" opacity="0.09" fill="none"/>
<path d="M284.7,414.7 l-10.7,40.5" stroke="#ffffff" stroke-width="2.5" opacity="0.28" fill="none"/>
<path d="M143.1,337.1 l-7.2,31.8" stroke="#ffffff" stroke-width="2.5" opacity="0.30" fill="none"/>
<path d="M62.9,441.0 l-11.3,29.9" stroke="#8080d0" stroke-width="1.5" opacity="0.08" fill="none"/>
<path d="M206.3,278.4 l-13.6,33.8" stroke="#ffffff" stroke-width="1" opacity="0.42" fill="none"/>
<path d="M131.0,188.8 l-13.9,44.5" stroke="#8080d0" stroke-width="1.5" opacity="0.12" fill="none"/>
<path d="M492.9,439.6 l-8.9,26.1" stroke="#ffffff" stroke-width="1.5" opacity="0.27" fill="none"/>
<path d="M500.3,291.7 l-9.0,23.2" stroke="#a0a0dc" stroke-width="1.5" opacity="0.12" fill="none"/>
<path d="M203.5,336.5 l-14.6,37.5" stroke="#8080d0" stroke-width="1.5" opacity="0.08" fill="none"/>
<path d="M152.5,78.8 l-4.2,13.0" stroke="#8080d0" stroke-width="2" opacity="0.07" fill="none"/>
<path d="M310.5,459.9 l-10.2,30.6" stroke="#a0a0dc" stroke-width="2" opacity="0.07" fill="none"/>
<path d="M262.5,60.6 l-13.0,34.0" stroke="#9090d8" stroke-width="1.5" opacity="0.14" fill="none"/>
<path d="M400.2,412.4 l-9.0,33.8" stroke="#a8a8e0" stroke-width="2.5" opacity="0.09" fill="none"/>
<path d="M439.4,342.1 l-5.6,13.8" stroke="#8080d0" stroke-width="2" opacity="0.13" fill="none"/>
<path d="M309.7,151.1 l-2.4,8.3" stroke="#a0a0dc" stroke-width="2.5" opacity="0.06" fill="none"/>
<path d="M413.2,424.5 l-3.9,10.9" stroke="#a8a8e0" stroke-width="1.5" opacity="0.07" fill="none"/>
<path d="M464.7,399.4 l-6.9,16.6" stroke="#9090d8" stroke-width="1" opacity="0.14" fill="none"/>
<path d="M97.7,200.0 l-9.7,28.3" stroke="#8080d0" stroke-width="2" opacity="0.10" fill="none"/>
<path d="M148.7,88.3 l-4.1,10.8" stroke="#9090d8" stroke-width="1" opacity="0.11" fill="none"/>
<path d="M366.3,163.0 l-9.8,40.1" stroke="#ffffff" stroke-width="1.5" opacity="0.37" fill="none"/>
<path d="M118.3,454.9 l-11.9,29.2" stroke="#8080d0" stroke-width="1.5" opacity="0.09" fill="none"/>
<path d="M168.6,67.4 l-7.9,19.6" stroke="#9090d8" stroke-width="2" opacity="0.07" fill="none"/>
<path d="M98.6,398.5 l-7.9,25.8" stroke="#ffffff" stroke-width="1.5" opacity="0.27" fill="none"/>
<path d="M347.5,306.5 l-4.8,12.9" stroke="#a8a8e0" stroke-width="2.5" opacity="0.07" fill="none"/>
<path d="M333.5,164.6 l-5.7,18.0" stroke="#a0a0dc" stroke-width="2.5" opacity="0.12" fill="none"/>
<path d="M38.0,373.3 l-5.7,16.3" stroke="#ffffff" stroke-width="2" opacity="0.30" fill="none"/>
<path d="M115.1,469.7 l-10.0,48.8" stroke="#a8a8e0" stroke-width="1.5" opacity="0.06" fill="none"/>
<path d="M251.5,197.5 l-9.3,36.4" stroke="#ffffff" stroke-width="1.5" opacity="0.33" fill="none"/>
<path d="M379.6,78.3 l-12.4,31.2" stroke="#a0a0dc" stroke-width="1" opacity="0.10" fill="none"/>
<path d="M100.7,449.2 l-13.2,42.8" stroke="#a0a0dc" stroke-width="1.5" opacity="0.07" fill="none"/>
<path d="M271.1,282.9 l-5.6,22.6" stroke="#a0a0dc" stroke-width="2.5" opacity="0.12" fill="none"/>
<path d="M75.6,88.5 l-7.1,23.2" stroke="#8080d0" stroke-width="1.5" opacity="0.10" fill="none"/>
<path d="M247.5,413.9 l-14.4,45.1" stroke="#ffffff" stroke-width="1.5" opacity="0.36" fill="none"/>
<path d="M480.7,455.8 l-12.5,31.6" stroke="#9090d8" stroke-width="2" opacity="0.11" fill="none"/>
<path d="M161.4,62.0 l-9.7,48.2" stroke="#9090d8" stroke-width="1.5" opacity="0.10" fill="none"/>
<path d="M324.7,193.7 l-2.5,10.6" stroke="#ffffff" stroke-width="1.5" opacity="0.38" fill="none"/>
<path d="M95.5,351.4 l-9.0,37.0" stroke="#a0a0dc" stroke-width="1" opacity="0.13" fill="none"/>
<path d="M354.5,280.2 l-12.2,35.4" stroke="#ffffff" stroke-width="2.5" opacity="0.46" fill="none"/>
<path d="M108.9,125.6 l-12.2,38.2" stroke="#a0a0dc" stroke-width="1.5" opacity="0.07" fill="none"/>
<path d="M141.2,481.8 l-4.3,12.2" stroke="#ffffff" stroke-width="2" opacity="0.31" fill="none"/>
<path d="M116.8,399.7 l-12.3,37.9" stroke="#8080d0" stroke-width="1.5" opacity="0.12" fill="none"/>
<path d="M390.0,449.7 l-5.9,28.0" stroke="#a0a0dc" stroke-width="2.5" opacity="0.12" fill="none"/>
<path d="M38.7,270.1 l-10.4,40.9" stroke="#a0a0dc" stroke-width="2.5" opacity="0.09" fill="none"/>
<path d="M382.0,417.2 l-9.3,35.5" stroke="#9090d8" stroke-width="1" opacity="0.13" fill="none"/>
<path d="M307.0,55.2 l-10.6,38.6" stroke="#a0a0dc" stroke-width="1" opacity="0.08" fill="none"/>
<path d="M183.6,426.3 l-15.7,45.2" stroke="#a0a0dc" stroke-width="2.5" opacity="0.09" fill="none"/>
<path d="M160.2,471.3 l-2.1,8.3" stroke="#a8a8e0" stroke-width="2.5" opacity="0.13" fill="none"/>
<path d="M343.7,71.2 l-16.1,42.4" stroke="#a0a0dc" stroke-width="1.5" opacity="0.08" fill="none"/>
<path d="M349.2,213.5 l-15.6,40.3" stroke="#8080d0" stroke-width="2.5" opacity="0.09" fill="none"/>
<path d="M426.7,197.2 l-9.2,42.5" stroke="#8080d0" stroke-width="1.5" opacity="0.13" fill="none"/>
<path d="M290.3,441.6 l-8.8,40.4" stroke="#a0a0dc" stroke-width="2" opacity="0.10" fill="none"/>
<path d="M251.4,371.1 l-10.3,41.9" stroke="#a8a8e0" stroke-width="1.5" opacity="0.07" fill="none"/>
<path d="M86.8,430.0 l-17.6,42.4" stroke="#9090d8" stroke-width="1.5" opacity="0.11" fill="none"/>
<path d="M269.6,71.3 l-11.4,42.6" stroke="#ffffff" stroke-width="1.5" opacity="0.49" fill="none"/>
<path d="M178.5,320.1 l-13.4,43.6" stroke="#8080d0" stroke-width="1.5" opacity="0.13" fill="none"/>
<path d="M388.3,199.1 l-12.3,44.7" stroke="#9090d8" stroke-width="2.5" opacity="0.10" fill="none"/>
<path d="M230.3,431.7 l-12.5,33.7" stroke="#ffffff" stroke-width="1.5" opacity="0.34" fill="none"/>
<path d="M491.0,362.7 l-2.6,13.0" stroke="#ffffff" stroke-width="1" opacity="0.40" fill="none"/>
<path d="M236.7,366.4 l-9.6,24.2" stroke="#a0a0dc" stroke-width="2.5" opacity="0.13" fill="none"/>
<path d="M408.6,214.9 l-4.1,16.9" stroke="#a8a8e0" stroke-width="1" opacity="0.09" fill="none"/>
<path d="M483.5,380.1 l-3.8,14.1" stroke="#ffffff" stroke-width="1" opacity="0.30" fill="none"/>
<path d="M174.7,193.3 l-13.6,36.3" stroke="#ffffff" stroke-width="2.5" opacity="0.25" fill="none"/>
<path d="M449.5,318.4 l-5.1,23.3" stroke="#a8a8e0" stroke-width="1.5" opacity="0.06" fill="none"/>
<path d="M339.9,441.8 l-3.5,12.3" stroke="#9090d8" stroke-width="1" opacity="0.08" fill="none"/>
<path d="M36.0,263.6 l-9.1,44.8" stroke="#ffffff" stroke-width="1.5" opacity="0.37" fill="none"/>
<path d="M97.8,154.9 l-4.3,13.8" stroke="#ffffff" stroke-width="1" opacity="0.28" fill="none"/>
<path d="M360.0,321.4 l-6.2,16.7" stroke="#9090d8" stroke-width="2" opacity="0.07" fill="none"/>
<path d="M27.2,197.8 l-8.9,37.1" stroke="#ffffff" stroke-width="1.5" opacity="0.31" fill="none"/>
<path d="M276.5,129.1 l-6.6,32.7" stroke="#ffffff" stroke-width="1.5" opacity="0.43" fill="none"/>
<path d="M79.5,253.3 l-11.4,30.9" stroke="#ffffff" stroke-width="2" opacity="0.26" fill="none"/>
<path d="M484.8,254.9 l-4.3,10.8" stroke="#8080d0" stroke-width="2.5" opacity="0.09" fill="none"/>
<path d="M179.1,135.6 l-4.8,16.4" stroke="#8080d0" stroke-width="2" opacity="0.08" fill="none"/>
<path d="M120.8,127.2 l-6.6,24.3" stroke="#a0a0dc" stroke-width="1.5" opacity="0.07" fill="none"/>
<path d="M129.7,98.9 l-5.2,15.2" stroke="#a0a0dc" stroke-width="2.5" opacity="0.07" fill="none"/>
<path d="M262.2,235.7 l-14.2,46.8" stroke="#ffffff" stroke-width="1.5" opacity="0.38" fill="none"/>
<path d="M256.2,275.2 l-9.9,27.3" stroke="#8080d0" stroke-width="1.5" opacity="0.09" fill="none"/>
<path d="M60.4,94.8 l-12.5,36.8" stroke="#8080d0" stroke-width="2" opacity="0.07" fill="none"/>
<path d="M444.4,312.2 l-1.7,8.1" stroke="#a0a0dc" stroke-width="2" opacity="0.10" fill="none"/>
<path d="M375.3,338.5 l-12.6,46.3" stroke="#ffffff" stroke-width="1.5" opacity="0.41" fill="none"/>
<path d="M390.6,53.9 l-9.6,35.6" stroke="#a0a0dc" stroke-width="2" opacity="0.11" fill="none"/>
<path d="M358.5,193.3 l-13.2,45.8" stroke="#8080d0" stroke-width="2" opacity="0.07" fill="none"/>
<path d="M84.5,436.7 l-15.9,38.5" stroke="#ffffff" stroke-width="1.5" opacity="0.36" fill="none"/>
<path d="M155.8,290.0 l-2.4,8.5" stroke="#8080d0" stroke-width="1.5" opacity="0.14" fill="none"/>
<path d="M81.6,163.3 l-9.2,32.3" stroke="#9090d8" stroke-width="1.5" opacity="0.09" fill="none"/>
<path d="M216.4,203.8 l-12.9,44.5" stroke="#a0a0dc" stroke-width="1.5" opacity="0.08" fill="none"/>
<path d="M267.0,462.8 l-8.9,22.1" stroke="#9090d8" stroke-width="1.5" opacity="0.12" fill="none"/>
<path d="M91.5,195.6 l-5.2,16.4" stroke="#8080d0" stroke-width="1" opacity="0.14" fill="none"/>
<path d="M466.3,109.3 l-3.9,13.5" stroke="#a8a8e0" stroke-width="1" opacity="0.09" fill="none"/>
<path d="M121.4,370.7 l-13.7,41.9" stroke="#8080d0" stroke-width="1" opacity="0.13" fill="none"/>
<path d="M398.5,304.0 l-18.6,45.3" stroke="#a8a8e0" stroke-width="1" opacity="0.07" fill="none"/>
<path d="M37.0,358.5 l-12.6,32.1" stroke="#9090d8" stroke-width="1.5" opacity="0.07" fill="none"/>
<path d="M326.2,336.1 l-15.4,46.2" stroke="#a0a0dc" stroke-width="2" opacity="0.09" fill="none"/>
<path d="M148.5,146.0 l-8.7,48.1" stroke="#a8a8e0" stroke-width="1.5" opacity="0.07" fill="none"/>
<path d="M101.9,202.9 l-14.7,36.1" stroke="#ffffff" stroke-width="2.5" opacity="0.42" fill="none"/>
<path d="M42.0,239.2 l-11.2,39.7" stroke="#ffffff" stroke-width="2" opacity="0.47" fill="none"/>
<path d="M316.8,202.8 l-4.7,24.2" stroke="#ffffff" stroke-width="1" opacity="0.38" fill="none"/>
<path d="M265.3,358.9 l-3.7,14.1" stroke="#8080d0" stroke-width="2.5" opacity="0.10" fill="none"/>
<path d="M25.9,400.9 l-6.4,24.6" stroke="#ffffff" stroke-width="2.5" opacity="0.43" fill="none"/>
<path d="M225.0,459.2 l-9.3,47.2" stroke="#a8a8e0" stroke-width="2.5" opacity="0.09" fill="none"/>
<path d="M209.7,163.3 l-10.3,44.8" stroke="#9090d8" stroke-width="2.5" opacity="0.14" fill="none"/>
<path d="M363.8,188.1 l-13.4,37.5" stroke="#a0a0dc" stroke-width="2.5" opacity="0.07" fill="none"/>
<path d="M442.2,270.6 l-3.8,19.2" stroke="#ffffff" stroke-width="1" opacity="0.48" fill="none"/>
<path d="M396.3,114.9 l-10.9,38.5" stroke="#ffffff" stroke-width="1.5" opacity="0.38" fill="none"/>
<path d="M371.4,56.6 l-11.8,30.5" stroke="#a0a0dc" stroke-width="2" opacity="0.13" fill="none"/>
<path d="M322.0,235.2 l-9.9,44.0" stroke="#8080d0" stroke-width="1" opacity="0.10" fill="none"/>
<path d="M207.6,65.0 l-14.2,40.6" stroke="#8080d0" stroke-width="1" opacity="0.08" fill="none"/>
<path d="M407.4,144.4 l-8.4,28.1" stroke="#ffffff" stroke-width="2.5" opacity="0.44" fill="none"/>
<path d="M361.9,338.9 l-5.0,19.0" stroke="#ffffff" stroke-width="1.5" opacity="0.42" fill="none"/>
<path d="M362.8,477.2 l-2.1,9.7" stroke="#9090d8" stroke-width="1.5" opacity="0.11" fill="none"/>
<path d="M451.4,364.4 l-15.1,44.9" stroke="#a8a8e0" stroke-width="2" opacity="0.08" fill="none"/>
<path d="M269.8,257.1 l-3.4,8.4" stroke="#a8a8e0" stroke-width="1" opacity="0.10" fill="none"/>
<path d="M256.0,360.7 l-12.4,36.6" stroke="#a8a8e0" stroke-width="2.5" opacity="0.14" fill="none"/>
<path d="M339.9,378.7 l-7.5,34.3" stroke="#a0a0dc" stroke-width="1.5" opacity="0.07" fill="none"/>
<path d="M471.7,145.3 l-15.1,41.3" stroke="#9090d8" stroke-width="1.5" opacity="0.08" fill="none"/>
<path d="M469.7,309.8 l-11.2,47.5" stroke="#ffffff" stroke-width="2" opacity="0.41" fill="none"/>
<path d="M498.0,149.1 l-7.5,24.4" stroke="#8080d0" stroke-width="1.5" opacity="0.06" fill="none"/>
<path d="M211.9,337.1 l-7.9,27.1" stroke="#a0a0dc" stroke-width="1.5" opacity="0.07" fill="none"/>
<path d="M359.5,296.6 l-8.9,23.4" stroke="#ffffff" stroke-width="1.5" opacity="0.37" fill="none"/>
<path d="M479.0,306.4 l-3.5,11.6" stroke="#a0a0dc" stroke-width="2.5" opacity="0.07" fill="none"/>
<path d="M458.6,204.3 l-8.8,47.5" stroke="#ffffff" stroke-width="1.5" opacity="0.40" fill="none"/>
<path d="M498.8,220.9 l-10.1,29.3" stroke="#a0a0dc" stroke-width="1" opacity="0.08" fill="none"/>
<path d="M85.5,175.7 l-9.4,33.1" stroke="#ffffff" stroke-width="1.5" opacity="0.49" fill="none"/>
<path d="M336.2,282.2 l-11.1,42.8" stroke="#a8a8e0" stroke-width="1.5" opacity="0.11" fill="none"/>
<path d="M168.8,477.8 l-3.3,17.9" stroke="#ffffff" stroke-width="1" opacity="0.25" fill="none"/>
<path d="M296.4,144.8 l-10.7,27.3" stroke="#8080d0" stroke-width="1.5" opacity="0.07" fill="none"/>
<path d="M162.7,105.5 l-4.4,15.5" stroke="#a0a0dc" stroke-width="1" opacity="0.06" fill="none"/>
<path d="M231.9,476.5 l-5.8,20.3" stroke="#ffffff" stroke-width="1" opacity="0.35" fill="none"/>
<path d="M470.4,303.8 l-16.4,39.3" stroke="#a8a8e0" stroke-width="1.5" opacity="0.13" fill="none"/>
<path d="M131.6,154.2 l-3.5,12.6" stroke="#a0a0dc" stroke-width="2.5" opacity="0.11" fill="none"/>
<path d="M209.5,492.4 l-2.4,8.8" stroke="#9090d8" stroke-width="2" opacity="0.13" fill="none"/>
<path d="M460.0,278.5 l-5.4,25.4" stroke="#9090d8" stroke-width="1" opacity="0.14" fill="none"/>
<path d="M513.2,321.5 l-12.6,33.1" stroke="#ffffff" stroke-width="1.5" opacity="0.28" fill="none"/>
<path d="M475.9,214.7 l-11.0,28.8" stroke="#a8a8e0" stroke-width="1.5" opacity="0.07" fill="none"/>
<path d="M413.3,113.6 l-5.7,20.2" stroke="#ffffff" stroke-width="1" opacity="0.37" fill="none"/>
<path d="M253.6,374.4 l-13.2,36.2" stroke="#a8a8e0" stroke-width="1.5" opacity="0.13" fill="none"/>
<path d="M25.4,443.8 l-5.3,22.4" stroke="#ffffff" stroke-width="2" opacity="0.35" fill="none"/>
<path d="M186.6,390.6 l-4.4,16.8" stroke="#ffffff" stroke-width="1" opacity="0.50" fill="none"/>
<path d="M145.2,64.2 l-16.4,43.9" stroke="#9090d8" stroke-width="1.5" opacity="0.12" fill="none"/>
<path d="M391.0,210.2 l-2.6,11.0" stroke="#ffffff" stroke-width="1" opacity="0.44" fill="none"/>
<path d="M241.3,357.8 l-4.6,14.5" stroke="#8080d0" stroke-width="1" opacity="0.10" fill="none"/>
<path d="M477.5,308.2 l-5.2,28.4" stroke="#8080d0" stroke-width="1.5" opacity="0.12" fill="none"/>
<path d="M161.0,82.2 l-2.8,9.6" stroke="#ffffff" stroke-width="1.5" opacity="0.35" fill="none"/>
<path d="M135.0,151.1 l-5.6,18.0" stroke="#ffffff" stroke-width="1.5" opacity="0.25" fill="none"/>
<path d="M132.2,233.7 l-6.1,15.2" stroke="#a0a0dc" stroke-width="1.5" opacity="0.09" fill="none"/>
<path d="M153.1,350.1 l-5.3,16.5" stroke="#9090d8" stroke-width="2" opacity="0.07" fill="none"/>
<path d="M59.4,279.2 l-9.7,48.6" stroke="#ffffff" stroke-width="1" opacity="0.38" fill="none"/>
<path d="M264.5,136.1 l-10.4,34.6" stroke="#a0a0dc" stroke-width="2" opacity="0.07" fill="none"/>
<path d="M311.3,447.3 l-5.0,12.4" stroke="#a8a8e0" stroke-width="2" opacity="0.11" fill="none"/>
<path d="M38.2,125.5 l-11.9,47.9" stroke="#9090d8" stroke-width="1" opacity="0.12" fill="none"/>
<path d="M145.6,142.5 l-16.0,45.1" stroke="#8080d0" stroke-width="1.5" opacity="0.13" fill="none"/>
<path d="M221.5,418.8 l-4.4,14.1" stroke="#9090d8" stroke-width="1.5" opacity="0.07" fill="none"/>
<path d="M288.3,246.4 l-3.5,17.5" stroke="#8080d0" stroke-width="1.5" opacity="0.07" fill="none"/>
<path d="M418.9,101.5 l-6.2,16.1" stroke="#9090d8" stroke-width="1.5" opacity="0.13" fill="none"/>
<path d="M513.4,184.4 l-10.4,45.0" stroke="#ffffff" stroke-width="2.5" opacity="0.49" fill="none"/>
<path d="M341.2,462.7 l-11.1,29.8" stroke="#a8a8e0" stroke-width="2.5" opacity="0.10" fill="none"/>
<path d="M189.3,216.5 l-7.9,28.4" stroke="#ffffff" stroke-width="1.5" opacity="0.32" fill="none"/>
<path d="M269.6,274.3 l-6.5,24.8" stroke="#9090d8" stroke-width="1.5" opacity="0.10" fill="none"/>
<path d="M159.4,382.8 l-8.5,36.6" stroke="#ffffff" stroke-width="2.5" opacity="0.31" fill="none"/>
<path d="M477.5,278.4 l-7.9,22.4" stroke="#8080d0" stroke-width="2" opacity="0.06" fill="none"/>
<path d="M150.2,190.1 l-8.7,35.6" stroke="#8080d0" stroke-width="1.5" opacity="0.08" fill="none"/>
<path d="M202.9,376.3 l-13.5,36.4" stroke="#ffffff" stroke-width="1.5" opacity="0.41" fill="none"/>
<path d="M357.5,325.7 l-12.4,35.0" stroke="#a0a0dc" stroke-width="1" opacity="0.09" fill="none"/>
<path d="M39.6,469.1 l-7.5,29.1" stroke="#a8a8e0" stroke-width="1.5" opacity="0.09" fill="none"/>
<path d="M258.2,361.2 l-13.7,36.5" stroke="#a0a0dc" stroke-width="1" opacity="0.08" fill="none"/>
<path d="M461.4,82.2 l-4.3,12.8" stroke="#ffffff" stroke-width="2" opacity="0.32" fill="none"/>
<path d="M100.4,119.2 l-8.4,33.9" stroke="#a0a0dc" stroke-width="1.5" opacity="0.06" fill="none"/>
<path d="M352.3,171.1 l-3.4,8.9" stroke="#ffffff" stroke-width="1" opacity="0.36" fill="none"/>
<path d="M100.0,393.5 l-10.8,27.3" stroke="#ffffff" stroke-width="1.5" opacity="0.38" fill="none"/>
<path d="M515.3,471.5 l-15.3,47.0" stroke="#ffffff" stroke-width="1.5" opacity="0.45" fill="none"/>
<path d="M384.4,109.0 l-7.8,20.0" stroke="#ffffff" stroke-width="1" opacity="0.43" fill="none"/>
<path d="M126.8,304.1 l-11.0,30.1" stroke="#a8a8e0" stroke-width="1" opacity="0.12" fill="none"/>
<path d="M439.2,160.0 l-6.3,27.1" stroke="#9090d8" stroke-width="1.5" opacity="0.06" fill="none"/>
<path d="M184.2,331.1 l-9.5,31.9" stroke="#a8a8e0" stroke-width="1" opacity="0.08" fill="none"/>
<path d="M174.9,237.7 l-4.6,22.8" stroke="#a0a0dc" stroke-width="1" opacity="0.14" fill="none"/>
<path d="M140.2,429.6 l-4.9,17.6" stroke="#8080d0" stroke-width="2" opacity="0.06" fill="none"/>
<path d="M412.4,409.1 l-4.4,18.8" stroke="#ffffff" stroke-width="2" opacity="0.50" fill="none"/>
<path d="M48.9,225.1 l-4.6,17.0" stroke="#ffffff" stroke-width="2.5" opacity="0.39" fill="none"/>
<path d="M211.8,408.0 l-4.2,11.7" stroke="#9090d8" stroke-width="2" opacity="0.08" fill="none"/>
<path d="M448.0,362.7 l-2.2,10.6" stroke="#a0a0dc" stroke-width="1.5" opacity="0.06" fill="none"/>
<path d="M228.5,243.8 l-14.9,44.2" stroke="#8080d0" stroke-width="1.5" opacity="0.07" fill="none"/>
<path d="M272.7,270.7 l-4.9,23.1" stroke="#a8a8e0" stroke-width="1.5" opacity="0.13" fill="none"/>
<path d="M199.9,198.0 l-9.3,32.5" stroke="#9090d8" stroke-width="1.5" opacity="0.11" fill="none"/>
<path d="M373.2,421.1 l-4.2,23.0" stroke="#a8a8e0" stroke-width="1.5" opacity="0.09" fill="none"/>
<path d="M436.4,203.1 l-4.8,25.1" stroke="#a8a8e0" stroke-width="1.5" opacity="0.09" fill="none"/>
<path d="M104.7,337.7 l-10.7,34.3" stroke="#a0a0dc" stroke-width="2" opacity="0.08" fill="none"/>
<path d="M413.8,246.2 l-13.5,40.8" stroke="#9090d8" stroke-width="1" opacity="0.09" fill="none"/>
<path d="M459.6,196.4 l-9.4,23.0" stroke="#ffffff" stroke-width="2.5" opacity="0.45" fill="none"/>
<path d="M288.1,91.8 l-5.4,14.4" stroke="#a8a8e0" stroke-width="2.5" opacity="0.12" fill="none"/>
<path d="M404.9,332.2 l-14.7,42.0" stroke="#a8a8e0" stroke-width="2.5" opacity="0.12" fill="none"/>
<path d="M382.2,108.6 l-6.4,18.4" stroke="#ffffff" stroke-width="1.5" opacity="0.49" fill="none"/>
<path d="M411.3,453.5 l-10.8,41.6" stroke="#ffffff" stroke-width="1.5" opacity="0.28" fill="none"/>
<path d="M443.4,267.7 l-11.1,29.1" stroke="#8080d0" stroke-width="1" opacity="0.13" fill="none"/>
<path d="M63.6,322.7 l-8.1,31.8" stroke="#8080d0" stroke-width="2.5" opacity="0.07" fill="none"/>
<path d="M419.5,77.6 l-8.7,45.2" stroke="#9090d8" stroke-width="1" opacity="0.11" fill="none"/>
<path d="M138.9,87.0 l-12.7,40.8" stroke="#a8a8e0" stroke-width="1.5" opacity="0.08" fill="none"/>
<path d="M461.8,211.4 l-2.9,8.6" stroke="#9090d8" stroke-width="1" opacity="0.06" fill="none"/>
<path d="M377.3,73.6 l-9.4,36.3" stroke="#8080d0" stroke-width="1.5" opacity="0.13" fill="none"/>
<path d="M449.3,482.7 l-5.9,25.8" stroke="#ffffff" stroke-width="1.5" opacity="0.48" fill="none"/>
<path d="M420.5,376.7 l-6.5,16.3" stroke="#ffffff" stroke-width="2.5" opacity="0.40" fill="none"/>
<path d="M447.9,113.9 l-11.0,35.7" stroke="#a8a8e0" stroke-width="2" opacity="0.14" fill="none"/>
<path d="M134.9,163.4 l-13.7,46.1" stroke="#8080d0" stroke-width="1.5" opacity="0.08" fill="none"/>
<path d="M45.3,97.9 l-5.9,25.8" stroke="#ffffff" stroke-width="2" opacity="0.34" fill="none"/>
<path d="M262.0,318.8 l-9.0,39.2" stroke="#ffffff" stroke-width="1.5" opacity="0.30" fill="none"/>
<path d="M195.7,367.9 l-10.9,33.9" stroke="#a8a8e0" stroke-width="2.5" opacity="0.09" fill="none"/>
<path d="M112.0,479.1 l-3.2,16.5" stroke="#a0a0dc" stroke-width="1.5" opacity="0.11" fill="none"/>
<path d="M465.5,172.8 l-8.2,21.1" stroke="#ffffff" stroke-width="1.5" opacity="0.40" fill="none"/>
<path d="M436.8,185.3 l-8.6,41.0" stroke="#a0a0dc" stroke-width="1.5" opacity="0.12" fill="none"/>
<path d="M90.7,292.1 l-6.3,31.0" stroke="#a0a0dc" stroke-width="1.5" opacity="0.11" fill="none"/>
<path d="M70.7,474.9 l-7.7,25.1" stroke="#a8a8e0" stroke-width="2" opacity="0.13" fill="none"/>
<path d="M103.9,122.5 l-14.8,43.2" stroke="#ffffff" stroke-width="2" opacity="0.32" fill="none"/>
<path d="M76.6,360.2 l-15.4,40.5" stroke="#ffffff" stroke-width="2.5" opacity="0.30" fill="none"/>
<path d="M337.5,273.1 l-2.2,12.0" stroke="#ffffff" stroke-width="1.5" opacity="0.26" fill="none"/>
<path d="M401.4,300.7 l-10.6,28.7" stroke="#8080d0" stroke-width="1.5" opacity="0.12" fill="none"/>
<path d="M137.4,299.6 l-11.1,33.4" stroke="#9090d8" stroke-width="2" opacity="0.14" fill="none"/>
<path d="M99.3,192.9 l-4.1,18.1" stroke="#9090d8" stroke-width="1" opacity="0.13" fill="none"/>
<path d="M449.9,83.2 l-6.8,17.1" stroke="#9090d8" stroke-width="1.5" opacity="0.08" fill="none"/>
<path d="M117.4,48.2 l-16.0,43.7" stroke="#8080d0" stroke-width="1.5" opacity="0.09" fill="none"/>
<path d="M391.1,435.0 l-3.0,12.5" stroke="#8080d0" stroke-width="2" opacity="0.10" fill="none"/>
<path d="M35.0,156.2 l-7.4,21.5" stroke="#ffffff" stroke-width="2" opacity="0.41" fill="none"/>
<path d="M284.8,153.9 l-6.7,24.7" stroke="#8080d0" stroke-width="2.5" opacity="0.10" fill="none"/>
<path d="M240.4,380.0 l-12.5,41.0" stroke="#ffffff" stroke-width="1.5" opacity="0.48" fill="none"/>
<path d="M424.0,156.1 l-3.5,9.4" stroke="#a8a8e0" stroke-width="2.5" opacity="0.14" fill="none"/>
<path d="M272.9,102.9 l-7.4,36.0" stroke="#9090d8" stroke-width="2" opacity="0.06" fill="none"/>
<path d="M333.6,321.0 l-12.7,41.5" stroke="#a0a0dc" stroke-width="1.5" opacity="0.09" fill="none"/>
<path d="M333.6,464.7 l-4.3,13.3" stroke="#8080d0" stroke-width="1" opacity="0.08" fill="none"/>
<path d="M212.3,365.7 l-10.2,28.0" stroke="#a8a8e0" stroke-width="1" opacity="0.06" fill="none"/>
<path d="M61.0,78.6 l-4.6,19.9" stroke="#9090d8" stroke-width="1.5" opacity="0.07" fill="none"/>
<path d="M337.1,488.1 l-4.7,20.0" stroke="#8080d0" stroke-width="1.5" opacity="0.07" fill="none"/>
<path d="M218.2,273.7 l-9.3,23.7" stroke="#ffffff" stroke-width="2.5" opacity="0.33" fill="none"/>
<path d="M498.5,222.4 l-9.0,24.7" stroke="#a0a0dc" stroke-width="1.5" opacity="0.10" fill="none"/>
<path d="M373.0,218.5 l-8.2,28.6" stroke="#ffffff" stroke-width="1" opacity="0.26" fill="none"/>
<path d="M242.5,437.9 l-5.0,15.8" stroke="#a0a0dc" stroke-width="2.5" opacity="0.09" fill="none"/>
<path d="M318.0,136.9 l-4.8,13.4" stroke="#9090d8" stroke-width="1.5" opacity="0.10" fill="none"/>
<path d="M226.6,71.5 l-5.2,26.1" stroke="#ffffff" stroke-width="1.5" opacity="0.36" fill="none"/>
<path d="M400.2,94.2 l-12.8,39.6" stroke="#8080d0" stroke-width="2.5" opacity="0.13" fill="none"/>
<path d="M424.9,207.3 l-15.4,38.6" stroke="#a8a8e0" stroke-width="1" opacity="0.10" fill="none"/>
<path d="M336.9,405.4 l-8.3,30.1" stroke="#a8a8e0" stroke-width="1" opacity="0.08" fill="none"/>
<path d="M500.1,244.3 l-10.6,30.8" stroke="#ffffff" stroke-width="1" opacity="0.44" fill="none"/>
<path d="M71.2,464.0 l-6.7,24.2" stroke="#9090d8" stroke-width="1" opacity="0.09" fill="none"/>
<path d="M304.9,141.3 l-9.0,42.3" stroke="#a0a0dc" stroke-width="2" opacity="0.07" fill="none"/>
<path d="M239.5,175.7 l-10.7,30.8" stroke="#8080d0" stroke-width="1.5" opacity="0.11" fill="none"/>
<path d="M66.9,401.0 l-9.9,27.1" stroke="#a0a0dc" stroke-width="1" opacity="0.10" fill="none"/>
<path d="M270.5,368.1 l-7.2,22.6" stroke="#a0a0dc" stroke-width="2.5" opacity="0.11" fill="none"/>
<path d="M317.0,161.1 l-7.7,25.1" stroke="#a8a8e0" stroke-width="2.5" opacity="0.07" fill="none"/>
<path d="M296.4,105.6 l-16.1,38.8" stroke="#8080d0" stroke-width="1.5" opacity="0.07" fill="none"/>
<path d="M149.3,327.3 l-4.8,15.4" stroke="#a0a0dc" stroke-width="1" opacity="0.11" fill="none"/>
<path d="M75.6,257.4 l-8.7,34.2" stroke="#a8a8e0" stroke-width="1" opacity="0.14" fill="none"/>
<path d="M214.2,356.8 l-4.1,15.7" stroke="#8080d0" stroke-width="2.5" opacity="0.14" fill="none"/>
<path d="M163.9,341.3 l-7.7,23.6" stroke="#a8a8e0" stroke-width="2" opacity="0.14" fill="none"/>
<path d="M403.9,483.3 l-5.9,26.9" stroke="#8080d0" stroke-width="1.5" opacity="0.12" fill="none"/>
<path d="M374.7,452.5 l-8.8,42.1" stroke="#ffffff" stroke-width="1.5" opacity="0.37" fill="none"/>
<path d="M177.5,208.1 l-8.8,40.6" stroke="#8080d0" stroke-width="2.5" opacity="0.07" fill="none"/>
<path d="M67.8,439.1 l-8.8,28.9" stroke="#ffffff" stroke-width="1" opacity="0.29" fill="none"/>
<path d="M378.4,145.5 l-14.1,41.3" stroke="#a0a0dc" stroke-width="1.5" opacity="0.07" fill="none"/>
<path d="M129.2,442.7 l-16.5,44.9" stroke="#9090d8" stroke-width="2" opacity="0.10" fill="none"/>
<path d="M330.5,402.3 l-2.3,11.7" stroke="#a0a0dc" stroke-width="2" opacity="0.08" fill="none"/>
<path d="M314.1,256.3 l-6.4,24.8" stroke="#a8a8e0" stroke-width="1" opacity="0.10" fill="none"/>
<path d="M130.5,80.3 l-12.2,29.7" stroke="#ffffff" stroke-width="1" opacity="0.26" fill="none"/>
<path d="M373.5,400.2 l-10.3,35.8" stroke="#a8a8e0" stroke-width="2" opacity="0.13" fill="none"/>
<path d="M249.5,211.8 l-5.5,13.7" stroke="#8080d0" stroke-width="2.5" opacity="0.11" fill="none"/>
<path d="M319.4,446.2 l-11.5,40.5" stroke="#9090d8" stroke-width="1.5" opacity="0.13" fill="none"/>
<path d="M204.5,103.2 l-5.3,21.3" stroke="#8080d0" stroke-width="1.5" opacity="0.08" fill="none"/>
<path d="M234.7,282.4 l-7.9,25.7" stroke="#a0a0dc" stroke-width="2.5" opacity="0.13" fill="none"/>
<path d="M358.9,139.2 l-3.0,12.4" stroke="#a8a8e0" stroke-width="1.5" opacity="0.07" fill="none"/>
<path d="M265.8,190.2 l-8.5,47.1" stroke="#ffffff" stroke-width="2" opacity="0.45" fill="none"/>
<path d="M338.2,121.7 l-17.3,45.7" stroke="#9090d8" stroke-width="1" opacity="0.10" fill="none"/>
<path d="M31.1,264.3 l-4.7,24.9" stroke="#a8a8e0" stroke-width="2" opacity="0.13" fill="none"/>
<path d="M405.0,313.6 l-5.9,17.0" stroke="#ffffff" stroke-width="2" opacity="0.35" fill="none"/>
<path d="M339.2,276.9 l-5.7,20.8" stroke="#a8a8e0" stroke-width="2" opacity="0.08" fill="none"/>
<path d="M508.1,60.3 l-9.1,42.4" stroke="#8080d0" stroke-width="2" opacity="0.10" fill="none"/>
<path d="M207.0,101.1 l-7.8,22.6" stroke="#8080d0" stroke-width="2" opacity="0.08" fill="none"/>
<path d="M329.0,83.5 l-9.6,29.2" stroke="#9090d8" stroke-width="2" opacity="0.09" fill="none"/>
<path d="M75.6,364.5 l-11.1,40.1" stroke="#8080d0" stroke-width="1" opacity="0.11" fill="none"/>
<path d="M454.3,475.8 l-15.1,36.9" stroke="#8080d0" stroke-width="2" opacity="0.11" fill="none"/>
<path d="M350.3,57.5 l-5.6,27.4" stroke="#ffffff" stroke-width="1.5" opacity="0.37" fill="none"/>
<path d="M77.0,324.9 l-12.6,30.9" stroke="#ffffff" stroke-width="1.5" opacity="0.31" fill="none"/>
<path d="M429.7,219.7 l-10.1,44.1" stroke="#ffffff" stroke-width="1" opacity="0.36" fill="none"/>
<path d="M297.0,359.0 l-12.7,47.0" stroke="#a0a0dc" stroke-width="2" opacity="0.11" fill="none"/>
<path d="M290.6,351.1 l-18.4,44.1" stroke="#8080d0" stroke-width="1.5" opacity="0.13" fill="none"/>
<path d="M50.4,405.3 l-2.4,9.0" stroke="#a8a8e0" stroke-width="1.5" opacity="0.12" fill="none"/>
<path d="M433.7,371.9 l-6.9,37.5" stroke="#ffffff" stroke-width="1.5" opacity="0.40" fill="none"/>
<path d="M495.8,382.5 l-16.3,45.1" stroke="#ffffff" stroke-width="2.5" opacity="0.49" fill="none"/>
<path d="M99.3,241.4 l-8.1,42.7" stroke="#a0a0dc" stroke-width="1.5" opacity="0.06" fill="none"/>
<path d="M161.1,259.9 l-16.8,44.2" stroke="#ffffff" stroke-width="1" opacity="0.46" fill="none"/>
<path d="M358.0,381.2 l-8.1,20.1" stroke="#a8a8e0" stroke-width="2" opacity="0.13" fill="none"/>
<path d="M290.2,65.4 l-9.4,43.9" stroke="#ffffff" stroke-width="2" opacity="0.44" fill="none"/>
<path d="M260.1,423.5 l-2.7,12.8" stroke="#a0a0dc" stroke-width="1.5" opacity="0.08" fill="none"/>
<path d="M28.4,423.1 l-15.7,39.7" stroke="#ffffff" stroke-width="1.5" opacity="0.41" fill="none"/>
<path d="M430.3,482.8 l-4.7,21.3" stroke="#a0a0dc" stroke-width="1.5" opacity="0.12" fill="none"/>
<path d="M217.8,115.1 l-10.9,34.8" stroke="#ffffff" stroke-width="1.5" opacity="0.39" fill="none"/>
<path d="M94.0,418.3 l-15.4,42.6" stroke="#8080d0" stroke-width="1" opacity="0.13" fill="none"/>
<path d="M120.2,197.8 l-2.7,7.8" stroke="#8080d0" stroke-width="1.5" opacity="0.10" fill="none"/>
<path d="M421.5,132.7 l-4.0,11.8" stroke="#a8a8e0" stroke-width="1.5" opacity="0.08" fill="none"/>
<path d="M484.1,50.9 l-14.2,43.9" stroke="#a8a8e0" stroke-width="1.5" opacity="0.10" fill="none"/>
<path d="M52.1,459.7 l-12.5,31.9" stroke="#a0a0dc" stroke-width="2" opacity="0.08" fill="none"/>
<path d="M311.3,246.5 l-6.7,21.5" stroke="#8080d0" stroke-width="1.5" opacity="0.13" fill="none"/>
<path d="M453.8,86.7 l-8.4,24.1" stroke="#a8a8e0" stroke-width="1" opacity="0.09" fill="none"/>
<path d="M242.7,128.9 l-10.0,43.6" stroke="#ffffff" stroke-width="1.5" opacity="0.41" fill="none"/>
<path d="M65.5,116.0 l-3.2,10.1" stroke="#a0a0dc" stroke-width="2" opacity="0.10" fill="none"/>
<path d="M218.4,151.5 l-9.6,36.2" stroke="#ffffff" stroke-width="2.5" opacity="0.30" fill="none"/>
<path d="M27.0,427.3 l-8.0,42.4" stroke="#ffffff" stroke-width="1.5" opacity="0.41" fill="none"/>
<path d="M294.8,375.6 l-3.6,11.0" stroke="#a0a0dc" stroke-width="1.5" opacity="0.09" fill="none"/>
<path d="M89.9,189.3 l-14.2,40.5" stroke="#ffffff" stroke-width="2.5" opacity="0.40" fill="none"/>
<path d="M327.1,135.6 l-5.4,17.9" stroke="#ffffff" stroke-width="1" opacity="0.43" fill="none"/>
<path d="M415.5,173.5 l-8.8,29.2" stroke="#ffffff" stroke-width="1.5" opacity="0.44" fill="none"/>
<path d="M251.3,238.9 l-3.6,15.8" stroke="#9090d8" stroke-width="1" opacity="0.11" fill="none"/>
<path d="M508.8,195.5 l-5.2,15.7" stroke="#8080d0" stroke-width="2" opacity="0.09" fill="none"/>
<path d="M214.5,157.3 l-7.7,19.5" stroke="#ffffff" stroke-width="2" opacity="0.42" fill="none"/>
<path d="M301.8,333.4 l-4.7,17.5" stroke="#ffffff" stroke-width="2.5" opacity="0.50" fill="none"/>
<path d="M187.4,211.5 l-11.9,48.5" stroke="#ffffff" stroke-width="1" opacity="0.39" fill="none"/>
<path d="M123.8,86.1 l-4.7,13.9" stroke="#a8a8e0" stroke-width="1" opacity="0.08" fill="none"/>
<path d="M406.6,245.2 l-8.6,29.3" stroke="#8080d0" stroke-width="1" opacity="0.07" fill="none"/>
<path d="M349.4,354.6 l-4.7,23.5" stroke="#a0a0dc" stroke-width="1.5" opacity="0.07" fill="none"/>
<path d="M294.4,343.3 l-6.6,16.1" stroke="#a0a0dc" stroke-width="2" opacity="0.06" fill="none"/>
<path d="M383.9,329.6 l-5.9,18.8" stroke="#a0a0dc" stroke-width="1.5" opacity="0.07" fill="none"/>
<path d="M112.2,407.6 l-6.5,26.2" stroke="#a8a8e0" stroke-width="1.5" opacity="0.11" fill="none"/>
<path d="M346.0,224.1 l-11.1,29.6" stroke="#8080d0" stroke-width="1.5" opacity="0.08" fill="none"/>
<path d="M140.6,403.0 l-9.8,29.7" stroke="#a0a0dc" stroke-width="2.5" opacity="0.06" fill="none"/>
<path d="M242.8,423.7 l-9.8,39.7" stroke="#ffffff" stroke-width="1.5" opacity="0.31" fill="none"/>
<path d="M371.2,180.2 l-12.2,36.4" stroke="#ffffff" stroke-width="2" opacity="0.34" fill="none"/>
<path d="M362.6,460.2 l-2.4,11.2" stroke="#9090d8" stroke-width="2.5" opacity="0.11" fill="none"/>
<path d="M364.4,324.2 l-10.1,33.7" stroke="#8080d0" stroke-width="2" opacity="0.10" fill="none"/>
<path d="M391.4,275.8 l-2.2,9.3" stroke="#a0a0dc" stroke-width="1.5" opacity="0.10" fill="none"/>
<path d="M24.4,163.9 l-8.3,35.0" stroke="#8080d0" stroke-width="2" opacity="0.11" fill="none"/>
<path d="M439.6,179.2 l-10.1,26.8" stroke="#a0a0dc" stroke-width="1.5" opacity="0.09" fill="none"/>
<path d="M39.1,175.9 l-16.3,43.5" stroke="#a8a8e0" stroke-width="1.5" opacity="0.09" fill="none"/>
<path d="M162.9,214.5 l-6.1,32.2" stroke="#a0a0dc" stroke-width="1.5" opacity="0.12" fill="none"/>
<path d="M225.3,333.0 l-5.5,26.6" stroke="#a0a0dc" stroke-width="2.5" opacity="0.08" fill="none"/>
<path d="M486.7,477.2 l-2.8,8.1" stroke="#a8a8e0" stroke-width="1.5" opacity="0.12" fill="none"/>
<path d="M153.8,198.5 l-9.9,37.4" stroke="#9090d8" stroke-width="1.5" opacity="0.10" fill="none"/>
<path d="M490.4,117.8 l-6.0,22.6" stroke="#9090d8" stroke-width="1.5" opacity="0.10" fill="none"/>
<path d="M236.1,84.9 l-13.5,44.9" stroke="#ffffff" stroke-width="1.5" opacity="0.38" fill="none"/>
<path d="M425.7,75.9 l-6.7,24.8" stroke="#ffffff" stroke-width="1.5" opacity="0.30" fill="none"/>
<path d="M267.5,453.6 l-6.2,17.2" stroke="#a8a8e0" stroke-width="1" opacity="0.13" fill="none"/>
<path d="M461.1,66.9 l-12.8,35.2" stroke="#8080d0" stroke-width="2.5" opacity="0.13" fill="none"/>
<path d="M198.1,267.4 l-12.6,33.7" stroke="#ffffff" stroke-width="1.5" opacity="0.38" fill="none"/>
<path d="M257.5,79.0 l-8.3,20.8" stroke="#9090d8" stroke-width="1.5" opacity="0.10" fill="none"/>
<path d="M277.7,428.6 l-12.5,46.4" stroke="#ffffff" stroke-width="2.5" opacity="0.29" fill="none"/>
<path d="M209.5,185.1 l-10.4,30.7" stroke="#ffffff" stroke-width="1" opacity="0.33" fill="none"/>
<path d="M217.1,470.7 l-4.1,22.1" stroke="#a8a8e0" stroke-width="2" opacity="0.08" fill="none"/>
<path d="M271.7,470.0 l-10.9,35.3" stroke="#ffffff" stroke-width="1.5" opacity="0.44" fill="none"/>
<path d="M187.3,126.6 l-4.4,15.4" stroke="#a0a0dc" stroke-width="1.5" opacity="0.11" fill="none"/>
<path d="M222.1,388.0 l-1.9,9.6" stroke="#ffffff" stroke-width="2" opacity="0.37" fill="none"/>
<path d="M424.0,185.2 l-11.8,28.5" stroke="#a8a8e0" stroke-width="2" opacity="0.07" fill="none"/>
<path d="M443.4,348.5 l-4.7,25.4" stroke="#8080d0" stroke-width="1" opacity="0.07" fill="none"/>
<path d="M371.4,367.4 l-12.9,30.9" stroke="#ffffff" stroke-width="2" opacity="0.49" fill="none"/>
<path d="M350.8,156.7 l-14.2,44.2" stroke="#a0a0dc" stroke-width="2.5" opacity="0.10" fill="none"/>
<path d="M154.5,260.2 l-3.5,16.3" stroke="#a8a8e0" stroke-width="1.5" opacity="0.06" fill="none"/>
<path d="M334.4,350.9 l-5.6,18.5" stroke="#9090d8" stroke-width="1.5" opacity="0.09" fill="none"/>
<path d="M368.8,263.9 l-14.2,47.3" stroke="#8080d0" stroke-width="2.5" opacity="0.13" fill="none"/>
<path d="M225.7,109.6 l-14.3,37.8" stroke="#ffffff" stroke-width="2.5" opacity="0.45" fill="none"/>
<path d="M88.7,434.7 l-8.6,24.2" stroke="#9090d8" stroke-width="1.5" opacity="0.10" fill="none"/>
<path d="M343.7,293.3 l-12.9,43.5" stroke="#a8a8e0" stroke-width="2.5" opacity="0.14" fill="none"/>
<path d="M129.0,66.8 l-7.1,20.6" stroke="#9090d8" stroke-width="1" opacity="0.09" fill="none"/>
<path d="M39.9,452.1 l-5.8,27.7" stroke="#ffffff" stroke-width="1.5" opacity="0.33" fill="none"/>
<path d="M381.4,143.5 l-8.4,30.2" stroke="#a8a8e0" stroke-width="2" opacity="0.06" fill="none"/>
<path d="M294.4,149.1 l-4.4,21.6" stroke="#ffffff" stroke-width="1.5" opacity="0.28" fill="none"/>
<path d="M378.6,373.4 l-8.0,34.3" stroke="#ffffff" stroke-width="2.5" opacity="0.39" fill="none"/>
<path d="M476.1,331.6 l-9.5,34.2" stroke="#ffffff" stroke-width="2" opacity="0.44" fill="none"/>
<path d="M304.5,113.1 l-7.9,24.7" stroke="#a8a8e0" stroke-width="2" opacity="0.10" fill="none"/>
<path d="M201.3,225.9 l-8.1,24.6" stroke="#9090d8" stroke-width="2.5" opacity="0.10" fill="none"/>
<path d="M183.5,105.6 l-10.2,27.0" stroke="#a0a0dc" stroke-width="1" opacity="0.06" fill="none"/>
<path d="M298.2,130.1 l-2.5,9.9" stroke="#8080d0" stroke-width="2" opacity="0.09" fill="none"/>
<path d="M55.9,433.6 l-14.7,40.6" stroke="#8080d0" stroke-width="1.5" opacity="0.13" fill="none"/>
<path d="M464.8,255.0 l-4.5,12.1" stroke="#9090d8" stroke-width="1.5" opacity="0.09" fill="none"/>
<path d="M424.6,353.2 l-8.1,40.2" stroke="#ffffff" stroke-width="1" opacity="0.43" fill="none"/>
<path d="M58.9,400.7 l-10.5,34.4" stroke="#a8a8e0" stroke-width="2.5" opacity="0.07" fill="none"/>
<path d="M310.2,241.9 l-3.6,18.1" stroke="#ffffff" stroke-width="1" opacity="0.31" fill="none"/>
<path d="M191.1,306.0 l-6.5,20.6" stroke="#8080d0" stroke-width="1.5" opacity="0.12" fill="none"/>
<path d="M189.8,453.5 l-15.5,45.4" stroke="#9090d8" stroke-width="2.5" opacity="0.07" fill="none"/>
<path d="M226.7,321.5 l-11.1,33.0" stroke="#ffffff" stroke-width="1" opacity="0.28" fill="none"/>
<path d="M297.4,133.5 l-5.5,20.1" stroke="#a0a0dc" stroke-width="2.5" opacity="0.08" fill="none"/>
<path d="M314.4,169.4 l-14.6,38.2" stroke="#8080d0" stroke-width="1.5" opacity="0.10" fill="none"/>
<path d="M467.9,133.6 l-5.8,15.0" stroke="#8080d0" stroke-width="1.5" opacity="0.09" fill="none"/>
<path d="M217.2,384.7 l-7.3,23.9" stroke="#a8a8e0" stroke-width="2" opacity="0.12" fill="none"/>
<path d="M470.5,231.0 l-15.8,43.9" stroke="#a0a0dc" stroke-width="2.5" opacity="0.11" fill="none"/>
<path d="M208.2,180.1 l-2.8,13.4" stroke="#8080d0" stroke-width="1.5" opacity="0.13" fill="none"/>
<path d="M273.1,320.2 l-3.5,13.3" stroke="#a0a0dc" stroke-width="2.5" opacity="0.06" fill="none"/>
<path d="M370.1,251.1 l-3.7,10.3" stroke="#9090d8" stroke-width="1.5" opacity="0.13" fill="none"/>
<path d="M292.6,201.8 l-6.1,17.4" stroke="#a0a0dc" stroke-width="1.5" opacity="0.11" fill="none"/>
<path d="M366.9,74.5 l-10.7,37.8" stroke="#ffffff" stroke-width="1" opacity="0.26" fill="none"/>
<path d="M103.8,166.2 l-6.6,29.5" stroke="#ffffff" stroke-width="2.5" opacity="0.30" fill="none"/>
<path d="M265.7,284.0 l-12.4,40.0" stroke="#a0a0dc" stroke-width="1.5" opacity="0.14" fill="none"/>
<path d="M400.4,221.1 l-9.2,39.7" stroke="#a0a0dc" stroke-width="2.5" opacity="0.12" fill="none"/>
<path d="M391.6,458.2 l-11.6,42.2" stroke="#a0a0dc" stroke-width="1.5" opacity="0.08" fill="none"/>
<path d="M326.5,151.8 l-15.1,37.8" stroke="#a0a0dc" stroke-width="2" opacity="0.11" fill="none"/>
<path d="M343.1,206.8 l-5.0,18.6" stroke="#ffffff" stroke-width="2.5" opacity="0.32" fill="none"/>
<path d="M308.8,440.7 l-11.9,28.9" stroke="#ffffff" stroke-width="1.5" opacity="0.38" fill="none"/>
<path d="M90.0,466.6 l-6.9,24.7" stroke="#9090d8" stroke-width="1.5" opacity="0.09" fill="none"/>
<path d="M70.5,329.7 l-16.5,39.9" stroke="#a8a8e0" stroke-width="1" opacity="0.07" fill="none"/>
<path d="M171.0,418.8 l-13.5,34.4" stroke="#ffffff" stroke-width="1.5" opacity="0.41" fill="none"/>
<path d="M288.1,189.6 l-4.6,14.7" stroke="#ffffff" stroke-width="2" opacity="0.30" fill="none"/>
<path d="M172.2,118.1 l-7.4,20.3" stroke="#9090d8" stroke-width="1.5" opacity="0.10" fill="none"/>
<path d="M324.2,248.2 l-14.5,36.6" stroke="#ffffff" stroke-width="2.5" opacity="0.45" fill="none"/>
<path d="M304.0,111.8 l-6.9,17.4" stroke="#a0a0dc" stroke-width="1.5" opacity="0.13" fill="none"/>
<path d="M30.8,104.5 l-3.0,15.3" stroke="#a0a0dc" stroke-width="2" opacity="0.09" fill="none"/>
<path d="M97.1,379.9 l-11.7,35.2" stroke="#8080d0" stroke-width="1.5" opacity="0.07" fill="none"/>
<path d="M434.4,248.1 l-13.5,39.9" stroke="#8080d0" stroke-width="1.5" opacity="0.10" fill="none"/>
<path d="M388.1,438.5 l-5.6,22.1" stroke="#8080d0" stroke-width="2" opacity="0.13" fill="none"/>
<path d="M396.3,297.8 l-7.8,21.9" stroke="#a0a0dc" stroke-width="1" opacity="0.11" fill="none"/>
<path d="M364.9,340.4 l-9.9,24.1" stroke="#a0a0dc" stroke-width="2.5" opacity="0.10" fill="none"/>
<path d="M290.2,231.8 l-11.6,29.2" stroke="#9090d8" stroke-width="1.5" opacity="0.11" fill="none"/>
<path d="M491.0,243.4 l-7.4,33.4" stroke="#a8a8e0" stroke-width="1" opacity="0.06" fill="none"/>
<path d="M32.5,152.9 l-14.6,38.0" stroke="#a8a8e0" stroke-width="2.5" opacity="0.07" fill="none"/>
<path d="M284.5,438.6 l-12.2,37.5" stroke="#a0a0dc" stroke-width="2" opacity="0.06" fill="none"/>
<path d="M432.9,159.6 l-5.8,20.5" stroke="#9090d8" stroke-width="2" opacity="0.09" fill="none"/>
<path d="M455.7,351.5 l-7.4,25.9" stroke="#a0a0dc" stroke-width="2.5" opacity="0.14" fill="none"/>
<path d="M29.0,437.6 l-11.0,36.4" stroke="#a8a8e0" stroke-width="2.5" opacity="0.06" fill="none"/>
<path d="M257.6,414.2 l-6.7,23.8" stroke="#8080d0" stroke-width="1" opacity="0.10" fill="none"/>
<path d="M470.5,266.1 l-3.6,11.1" stroke="#a0a0dc" stroke-width="1.5" opacity="0.11" fill="none"/>
<path d="M340.6,246.3 l-6.5,29.9" stroke="#ffffff" stroke-width="2" opacity="0.33" fill="none"/>
<path d="M319.9,195.1 l-9.2,48.1" stroke="#ffffff" stroke-width="1.5" opacity="0.27" fill="none"/>
<path d="M82.6,212.3 l-4.0,12.7" stroke="#a8a8e0" stroke-width="1.5" opacity="0.08" fill="none"/>
<path d="M132.4,71.0 l-7.3,18.1" stroke="#ffffff" stroke-width="2.5" opacity="0.33" fill="none"/>
<path d="M355.6,295.6 l-10.9,31.3" stroke="#8080d0" stroke-width="2.5" opacity="0.11" fill="none"/>
<path d="M110.0,244.4 l-13.5,41.9" stroke="#ffffff" stroke-width="1" opacity="0.49" fill="none"/>
<path d="M183.7,330.1 l-11.2,27.1" stroke="#a8a8e0" stroke-width="2" opacity="0.08" fill="none"/>
<path d="M206.3,317.0 l-10.7,31.5" stroke="#a0a0dc" stroke-width="2.5" opacity="0.13" fill="none"/>
<path d="M214.7,369.8 l-9.7,46.7" stroke="#8080d0" stroke-width="1.5" opacity="0.09" fill="none"/>
<path d="M176.1,122.2 l-13.0,46.8" stroke="#ffffff" stroke-width="1" opacity="0.39" fill="none"/>
<path d="M387.9,471.0 l-17.4,44.0" stroke="#a8a8e0" stroke-width="1.5" opacity="0.14" fill="none"/>
<path d="M285.7,472.9 l-7.1,17.2" stroke="#a0a0dc" stroke-width="2.5" opacity="0.12" fill="none"/>
<path d="M337.8,86.1 l-7.6,30.4" stroke="#ffffff" stroke-width="2" opacity="0.31" fill="none"/>
<path d="M424.7,65.4 l-4.8,25.0" stroke="#9090d8" stroke-width="1.5" opacity="0.09" fill="none"/>
<path d="M309.9,153.5 l-9.6,36.5" stroke="#ffffff" stroke-width="1" opacity="0.48" fill="none"/>
<path d="M59.1,359.0 l-8.1,21.1" stroke="#8080d0" stroke-width="1" opacity="0.14" fill="none"/>
<path d="M415.6,247.0 l-7.6,40.7" stroke="#a0a0dc" stroke-width="2.5" opacity="0.13" fill="none"/>
<path d="M189.8,408.9 l-6.3,27.2" stroke="#ffffff" stroke-width="1.5" opacity="0.40" fill="none"/>
<path d="M302.3,416.5 l-2.1,11.4" stroke="#ffffff" stroke-width="2.5" opacity="0.46" fill="none"/>
<path d="M55.0,392.9 l-13.7,40.5" stroke="#ffffff" stroke-width="2" opacity="0.46" fill="none"/>
<path d="M169.0,134.9 l-7.9,35.8" stroke="#a8a8e0" stroke-width="2.5" opacity="0.07" fill="none"/>
<path d="M241.4,307.0 l-8.8,35.5" stroke="#9090d8" stroke-width="1" opacity="0.11" fill="none"/>
<path d="M203.1,65.7 l-8.9,24.6" stroke="#9090d8" stroke-width="2.5" opacity="0.14" fill="none"/>
<path d="M129.4,85.0 l-13.6,34.6" stroke="#9090d8" stroke-width="1.5" opacity="0.10" fill="none"/>
<path d="M506.3,199.3 l-6.2,20.3" stroke="#ffffff" stroke-width="1.5" opacity="0.37" fill="none"/>
<path d="M100.9,220.7 l-7.5,25.7" stroke="#ffffff" stroke-width="1" opacity="0.39" fill="none"/>
<path d="M264.1,92.7 l-4.0,17.6" stroke="#9090d8" stroke-width="1.5" opacity="0.11" fill="none"/>
<path d="M395.0,259.7 l-6.9,27.0" stroke="#ffffff" stroke-width="2.5" opacity="0.37" fill="none"/>
<path d="M477.2,188.0 l-3.2,11.6" stroke="#a8a8e0" stroke-width="2.5" opacity="0.09" fill="none"/>
<path d="M135.8,322.7 l-13.2,36.7" stroke="#ffffff" stroke-width="2" opacity="0.48" fill="none"/>
<path d="M241.7,329.6 l-15.4,41.6" stroke="#a0a0dc" stroke-width="1.5" opacity="0.07" fill="none"/>
<path d="M175.1,255.9 l-10.2,37.9" stroke="#9090d8" stroke-width="2" opacity="0.09" fill="none"/>
<path d="M305.5,286.3 l-2.9,15.6" stroke="#a8a8e0" stroke-width="1.5" opacity="0.12" fill="none"/>
<path d="M190.8,201.8 l-4.3,16.2" stroke="#ffffff" stroke-width="1.5" opacity="0.48" fill="none"/>
<path d="M123.4,434.8 l-8.9,46.7" stroke="#9090d8" stroke-width="2.5" opacity="0.06" fill="none"/>
<path d="M174.2,312.6 l-15.4,39.1" stroke="#ffffff" stroke-width="2" opacity="0.46" fill="none"/>
<path d="M393.9,203.2 l-16.6,39.9" stroke="#8080d0" stroke-width="2.5" opacity="0.10" fill="none"/>
<path d="M313.2,116.9 l-10.4,41.7" stroke="#a0a0dc" stroke-width="2" opacity="0.11" fill="none"/>
<path d="M231.0,410.0 L241.0,403.5" stroke="#3030b0" stroke-width="4" opacity="0.85" fill="none" stroke-linecap="round" filter="url(#blur1)"/>
<path d="M226.0,413.0 L256.0,394.0" stroke="#6868cc" stroke-width="5" opacity="0.35" fill="none" stroke-linecap="round" filter="url(#blur1)"/>
<path d="M200.0,362.0 L222.0,350.0" stroke="#7878d0" stroke-width="4" opacity="0.3" fill="none" stroke-linecap="round" filter="url(#blur1)"/>
<path d="M501.0,212.0 L491.0,243.0 L479.0,272.0 L469.0,298.0" stroke="#8c8cd8" stroke-width="4" opacity="0.6" fill="none" stroke-linecap="round" filter="url(#blur1)"/>
<path d="M98.0,124.0 L120.0,104.0" stroke="#8888d4" stroke-width="3.5" opacity="0.45" fill="none" stroke-linecap="round" filter="url(#blur1)"/>
<path d="M112.0,140.0 L128.0,118.0" stroke="#9898dc" stroke-width="3" opacity="0.3" fill="none" stroke-linecap="round" filter="url(#blur1)"/>
<ellipse cx="72" cy="150" rx="9" ry="24" transform="rotate(-32 72 150)" fill="#a8a8e0" opacity="0.18" filter="url(#blur2)"/>
<ellipse cx="150" cy="240" rx="8" ry="22" transform="rotate(-25 150 240)" fill="#a8a8e0" opacity="0.15" filter="url(#blur2)"/>
<path d="M318.0,255.0 L336.0,222.0" stroke="#9090d8" stroke-width="3.5" opacity="0.35" fill="none" stroke-linecap="round" filter="url(#blur1)"/>
<path d="M300.0,215.0 L312.0,190.0" stroke="#9898dc" stroke-width="3" opacity="0.3" fill="none" stroke-linecap="round" filter="url(#blur1)"/>
<path d="M395.0,310.0 L410.0,280.0" stroke="#9898dc" stroke-width="3" opacity="0.25" fill="none" stroke-linecap="round" filter="url(#blur1)"/>
<path d="M380.0,205.0 L392.0,180.0" stroke="#9898dc" stroke-width="3" opacity="0.3" fill="none" stroke-linecap="round" filter="url(#blur1)"/>
<path d="M455.0,180.0 L468.0,205.0" stroke="#a0a0e0" stroke-width="3" opacity="0.0" fill="none" stroke-linecap="round" filter="url(#blur1)"/></g></g>
<g transform="translate(274.5,308) rotate(-50)"><ellipse cx="0" cy="0" rx="26" ry="8" fill="#3434b0" opacity="0.5" filter="url(#blur2)"/><ellipse cx="0" cy="0" rx="17" ry="6" fill="#2a3a90"/><ellipse cx="0" cy="0" rx="16.5" ry="5.4" fill="#70a030"/><ellipse cx="0" cy="0" rx="15.5" ry="4.8" fill="#ff6a00"/><ellipse cx="0.5" cy="0" rx="14" ry="4.2" fill="#ff1a00"/></g>
<path d="M239.7,78 L251.9,136 L253.3,144 L272,164.6 L272,173.5 L252.8,195 L272,215.6 L272,224.7 L253,246 L239.7,308.5 L252.2,376.3 L272,398 L272,406.4 L253.2,427.6 L272,449.5 L272,457 L262.6,465.6 L253.2,479.7 L249.9,497" fill="none" stroke="#962626" stroke-width="1.3"/>
<path d="M304.7,78 L292.2,144 L272,164.6 M272,173.5 L291.6,195 L272,215.6 M272,224.7 L291,246 L305,308.5 L292,376.3 L272,398 M272,406.4 L291.6,427.6 L272,449.5 M272,457 L290.9,479 L294.9,497" fill="none" stroke="#962626" stroke-width="1.3"/>
<line x1="23" y1="195" x2="509" y2="195" stroke="#7848a8" stroke-width="1.3" stroke-dasharray="1.7 1.5"/>
<line x1="23" y1="427.7" x2="509" y2="427.7" stroke="#7848a8" stroke-width="1.3" stroke-dasharray="1.7 1.5"/>
<line x1="23" y1="310.5" x2="509" y2="310.5" stroke="#7848a8" stroke-width="1.3" stroke-dasharray="1.7 1.5"/>
<line x1="272.5" y1="78" x2="272.5" y2="496" stroke="#c03448" stroke-width="1.5" stroke-dasharray="1.8 1.4"/>
<line x1="40" y1="80" x2="381" y2="415" stroke="#2020d0" stroke-width="1.5" stroke-dasharray="2.6 1.7"/>
<rect x="174.4" y="186.9" width="194.8" height="254.5" fill="none" stroke="#f41c1c" stroke-width="2.7" stroke-dasharray="4.4 2.4"/>
<rect x="23" y="181" width="27" height="13" fill="#8e00a6"/>
<text x="29.5" y="191.5" font-size="11" fill="#100018" stroke="#100018" stroke-width="0.4" font-weight="bold" textLength="10" lengthAdjust="spacingAndGlyphs">L1</text>
<rect x="23" y="297" width="27" height="12" fill="#8e00a6"/>
<text x="29.5" y="307.5" font-size="11" fill="#100018" stroke="#100018" stroke-width="0.4" font-weight="bold" textLength="10" lengthAdjust="spacingAndGlyphs">L2</text>
<rect x="23" y="414" width="27" height="13" fill="#8e00a6"/>
<text x="29.5" y="424.5" font-size="11" fill="#100018" stroke="#100018" stroke-width="0.4" font-weight="bold" textLength="10" lengthAdjust="spacingAndGlyphs">L3</text>
<line x1="23" y1="308.5" x2="509" y2="308.5" stroke="#e03040" stroke-width="1.5" stroke-dasharray="1.8 1.4"/>
<rect x="382" y="416" width="35" height="14" fill="#0000ff"/>
<text x="388" y="427.3" font-size="12.5" fill="#e8e8ff" textLength="24.5" lengthAdjust="spacingAndGlyphs">48.5</text>
</g>
<rect x="509" y="56" width="2" height="440" fill="#f4e8e8" />
<rect x="511" y="56" width="17" height="4" fill="#ff0000" />
<rect x="511" y="60" width="17" height="5" fill="#ff0000" />
<rect x="511" y="65" width="17" height="4" fill="#ff0000" />
<rect x="511" y="69" width="17" height="5" fill="#ff0000" />
<rect x="511" y="74" width="17" height="4" fill="#ff0000" />
<rect x="511" y="78" width="17" height="4" fill="#ff0000" />
<rect x="511" y="82" width="17" height="5" fill="#ff0000" />
<rect x="511" y="87" width="17" height="4" fill="#ff0000" />
<rect x="511" y="91" width="17" height="5" fill="#ff0000" />
<rect x="511" y="96" width="17" height="4" fill="#ff0000" />
<rect x="511" y="100" width="17" height="4" fill="#ff0000" />
<rect x="511" y="104" width="17" height="5" fill="#ff0000" />
<rect x="511" y="109" width="17" height="4" fill="#ff0000" />
<rect x="511" y="113" width="17" height="4" fill="#ff0000" />
<rect x="511" y="117" width="17" height="5" fill="#ff0000" />
<rect x="511" y="122" width="17" height="4" fill="#ff0000" />
<rect x="511" y="126" width="17" height="5" fill="#ff0000" />
<rect x="511" y="131" width="17" height="4" fill="#ff0000" />
<rect x="511" y="135" width="17" height="4" fill="#ff0000" />
<rect x="511" y="139" width="17" height="5" fill="#ff0000" />
<rect x="511" y="144" width="17" height="4" fill="#ff0000" />
<rect x="511" y="148" width="17" height="5" fill="#ff0000" />
<rect x="511" y="153" width="17" height="4" fill="#ff0000" />
<rect x="511" y="157" width="17" height="4" fill="#ff0000" />
<rect x="511" y="161" width="17" height="5" fill="#ff0000" />
<rect x="511" y="166" width="17" height="4" fill="#ff0000" />
<rect x="511" y="170" width="17" height="5" fill="#ff0000" />
<rect x="511" y="175" width="17" height="4" fill="#ff0000" />
<rect x="511" y="179" width="17" height="4" fill="#ff0000" />
<rect x="511" y="183" width="17" height="5" fill="#ff0000" />
<rect x="511" y="188" width="17" height="4" fill="#ff0000" />
<rect x="511" y="192" width="17" height="4" fill="#ff0000" />
<rect x="511" y="196" width="17" height="5" fill="#ff0000" />
<rect x="511" y="201" width="17" height="4" fill="#ff0000" />
<rect x="511" y="205" width="17" height="5" fill="#ff0000" />
<rect x="511" y="210" width="17" height="4" fill="#ff0000" />
<rect x="511" y="214" width="17" height="4" fill="#ff0000" />
<rect x="511" y="218" width="17" height="5" fill="#ff0000" />
<rect x="511" y="223" width="17" height="4" fill="#ff0000" />
<rect x="511" y="227" width="17" height="5" fill="#ff0000" />
<rect x="511" y="232" width="17" height="4" fill="#ff0b00" />
<rect x="511" y="236" width="17" height="4" fill="#ff2500" />
<rect x="511" y="240" width="17" height="5" fill="#ff3c00" />
<rect x="511" y="245" width="17" height="4" fill="#ff5100" />
<rect x="511" y="249" width="17" height="5" fill="#ff6800" />
<rect x="511" y="254" width="17" height="4" fill="#ff8200" />
<rect x="511" y="258" width="17" height="4" fill="#ff9d00" />
<rect x="511" y="262" width="17" height="5" fill="#ffb700" />
<rect x="511" y="267" width="17" height="4" fill="#ffd700" />
<rect x="511" y="271" width="17" height="4" fill="#fffa00" />
<rect x="511" y="275" width="17" height="5" fill="#eaf500" />
<rect x="511" y="280" width="17" height="4" fill="#d1e800" />
<rect x="511" y="284" width="17" height="5" fill="#b9dc00" />
<rect x="511" y="289" width="17" height="4" fill="#a4d200" />
<rect x="511" y="293" width="17" height="4" fill="#8fc700" />
<rect x="511" y="297" width="17" height="5" fill="#7abd00" />
<rect x="511" y="302" width="17" height="4" fill="#65b200" />
<rect x="511" y="306" width="17" height="5" fill="#4fac00" />
<rect x="511" y="311" width="17" height="4" fill="#3aa600" />
<rect x="511" y="315" width="17" height="4" fill="#24a100" />
<rect x="511" y="319" width="17" height="5" fill="#1b960e" />
<rect x="511" y="324" width="17" height="4" fill="#158b20" />
<rect x="511" y="328" width="17" height="5" fill="#107f31" />
<rect x="511" y="333" width="17" height="4" fill="#10713f" />
<rect x="511" y="337" width="17" height="4" fill="#10634d" />
<rect x="511" y="341" width="17" height="5" fill="#16555b" />
<rect x="511" y="346" width="17" height="4" fill="#1d4769" />
<rect x="511" y="350" width="17" height="5" fill="#203a76" />
<rect x="511" y="355" width="17" height="4" fill="#202e82" />
<rect x="511" y="359" width="17" height="4" fill="#20228e" />
<rect x="511" y="363" width="17" height="5" fill="#242496" />
<rect x="511" y="368" width="17" height="4" fill="#2a2a9f" />
<rect x="511" y="372" width="17" height="4" fill="#2f2fa7" />
<rect x="511" y="376" width="17" height="5" fill="#3838ae" />
<rect x="511" y="381" width="17" height="4" fill="#4141b5" />
<rect x="511" y="385" width="17" height="5" fill="#4b4bbc" />
<rect x="511" y="390" width="17" height="4" fill="#5353c1" />
<rect x="511" y="394" width="17" height="4" fill="#5959c3" />
<rect x="511" y="398" width="17" height="5" fill="#5f5fc5" />
<rect x="511" y="403" width="17" height="4" fill="#6565c7" />
<rect x="511" y="407" width="17" height="5" fill="#6c6cc9" />
<rect x="511" y="412" width="17" height="4" fill="#7575cc" />
<rect x="511" y="416" width="17" height="4" fill="#7d7dcf" />
<rect x="511" y="420" width="17" height="5" fill="#8585d2" />
<rect x="511" y="425" width="17" height="4" fill="#8e8ed6" />
<rect x="511" y="429" width="17" height="5" fill="#9797d9" />
<rect x="511" y="434" width="17" height="4" fill="#9f9fdd" />
<rect x="511" y="438" width="17" height="4" fill="#a8a8e0" />
<rect x="511" y="442" width="17" height="5" fill="#aeaee2" />
<rect x="511" y="447" width="17" height="4" fill="#b4b4e3" />
<rect x="511" y="451" width="17" height="4" fill="#babae5" />
<rect x="511" y="455" width="17" height="5" fill="#c0c0e7" />
<rect x="511" y="460" width="17" height="4" fill="#c5c5e8" />
<rect x="511" y="464" width="17" height="5" fill="#cbcbea" />
<rect x="511" y="469" width="17" height="4" fill="#d1d1ed" />
<rect x="511" y="473" width="17" height="4" fill="#d8d8ef" />
<rect x="511" y="477" width="17" height="5" fill="#dfdff2" />
<rect x="511" y="482" width="17" height="4" fill="#e6e6f4" />
<rect x="511" y="486" width="17" height="5" fill="#ededf7" />
<rect x="511" y="491" width="17" height="4" fill="#f4f4fa" />
<rect x="511" y="495" width="17" height="1" fill="#f7f7fc" />
<rect x="528" y="56" width="3" height="440" fill="#f0f0f0" />
<rect x="531" y="56" width="20" height="440" fill="#808000" />
<rect x="531" y="56" width="1" height="440" fill="#000" />
<rect x="531" y="495" width="14" height="1" fill="#000" />
<text transform="translate(538,494) rotate(90)" font-size="12" fill="#000" text-anchor="end">0</text>
<rect x="531" y="491" width="4" height="1" fill="#000" />
<rect x="531" y="486" width="4" height="1" fill="#000" />
<rect x="531" y="482" width="4" height="1" fill="#000" />
<rect x="531" y="477" width="4" height="1" fill="#000" />
<rect x="531" y="473" width="6" height="1" fill="#000" />
<rect x="531" y="469" width="4" height="1" fill="#000" />
<rect x="531" y="464" width="4" height="1" fill="#000" />
<rect x="531" y="460" width="4" height="1" fill="#000" />
<rect x="531" y="455" width="4" height="1" fill="#000" />
<rect x="531" y="451" width="14" height="1" fill="#000" />
<text transform="translate(538,450) rotate(90)" font-size="12" fill="#000" text-anchor="end">10</text>
<rect x="531" y="447" width="4" height="1" fill="#000" />
<rect x="531" y="442" width="4" height="1" fill="#000" />
<rect x="531" y="438" width="4" height="1" fill="#000" />
<rect x="531" y="434" width="4" height="1" fill="#000" />
<rect x="531" y="429" width="6" height="1" fill="#000" />
<rect x="531" y="425" width="4" height="1" fill="#000" />
<rect x="531" y="420" width="4" height="1" fill="#000" />
<rect x="531" y="416" width="4" height="1" fill="#000" />
<rect x="531" y="412" width="4" height="1" fill="#000" />
<rect x="531" y="407" width="14" height="1" fill="#000" />
<text transform="translate(538,406) rotate(90)" font-size="12" fill="#000" text-anchor="end">20</text>
<rect x="531" y="403" width="4" height="1" fill="#000" />
<rect x="531" y="398" width="4" height="1" fill="#000" />
<rect x="531" y="394" width="4" height="1" fill="#000" />
<rect x="531" y="390" width="4" height="1" fill="#000" />
<rect x="531" y="385" width="6" height="1" fill="#000" />
<rect x="531" y="381" width="4" height="1" fill="#000" />
<rect x="531" y="376" width="4" height="1" fill="#000" />
<rect x="531" y="372" width="4" height="1" fill="#000" />
<rect x="531" y="368" width="4" height="1" fill="#000" />
<rect x="531" y="363" width="14" height="1" fill="#000" />
<text transform="translate(538,362) rotate(90)" font-size="12" fill="#000" text-anchor="end">30</text>
<rect x="531" y="359" width="4" height="1" fill="#000" />
<rect x="531" y="355" width="4" height="1" fill="#000" />
<rect x="531" y="350" width="4" height="1" fill="#000" />
<rect x="531" y="346" width="4" height="1" fill="#000" />
<rect x="531" y="341" width="6" height="1" fill="#000" />
<rect x="531" y="337" width="4" height="1" fill="#000" />
<rect x="531" y="333" width="4" height="1" fill="#000" />
<rect x="531" y="328" width="4" height="1" fill="#000" />
<rect x="531" y="324" width="4" height="1" fill="#000" />
<rect x="531" y="319" width="14" height="1" fill="#000" />
<text transform="translate(538,318) rotate(90)" font-size="12" fill="#000" text-anchor="end">40</text>
<rect x="531" y="315" width="4" height="1" fill="#000" />
<rect x="531" y="311" width="4" height="1" fill="#000" />
<rect x="531" y="306" width="4" height="1" fill="#000" />
<rect x="531" y="302" width="4" height="1" fill="#000" />
<rect x="531" y="297" width="6" height="1" fill="#000" />
<rect x="531" y="293" width="4" height="1" fill="#000" />
<rect x="531" y="289" width="4" height="1" fill="#000" />
<rect x="531" y="284" width="4" height="1" fill="#000" />
<rect x="531" y="280" width="4" height="1" fill="#000" />
<rect x="531" y="276" width="14" height="1" fill="#000" />
<text transform="translate(538,275) rotate(90)" font-size="12" fill="#000" text-anchor="end">50</text>
<rect x="531" y="271" width="4" height="1" fill="#000" />
<rect x="531" y="267" width="4" height="1" fill="#000" />
<rect x="531" y="262" width="4" height="1" fill="#000" />
<rect x="531" y="258" width="4" height="1" fill="#000" />
<rect x="531" y="254" width="6" height="1" fill="#000" />
<rect x="531" y="249" width="4" height="1" fill="#000" />
<rect x="531" y="245" width="4" height="1" fill="#000" />
<rect x="531" y="240" width="4" height="1" fill="#000" />
<rect x="531" y="236" width="4" height="1" fill="#000" />
<rect x="531" y="232" width="14" height="1" fill="#000" />
<text transform="translate(538,231) rotate(90)" font-size="12" fill="#000" text-anchor="end">60</text>
<rect x="531" y="227" width="4" height="1" fill="#000" />
<rect x="531" y="223" width="4" height="1" fill="#000" />
<rect x="531" y="218" width="4" height="1" fill="#000" />
<rect x="531" y="214" width="4" height="1" fill="#000" />
<rect x="531" y="210" width="6" height="1" fill="#000" />
<rect x="531" y="205" width="4" height="1" fill="#000" />
<rect x="531" y="201" width="4" height="1" fill="#000" />
<rect x="531" y="196" width="4" height="1" fill="#000" />
<rect x="531" y="192" width="4" height="1" fill="#000" />
<rect x="531" y="188" width="14" height="1" fill="#000" />
<text transform="translate(538,187) rotate(90)" font-size="12" fill="#000" text-anchor="end">70</text>
<rect x="531" y="183" width="4" height="1" fill="#000" />
<rect x="531" y="179" width="4" height="1" fill="#000" />
<rect x="531" y="175" width="4" height="1" fill="#000" />
<rect x="531" y="170" width="4" height="1" fill="#000" />
<rect x="531" y="166" width="6" height="1" fill="#000" />
<rect x="531" y="161" width="4" height="1" fill="#000" />
<rect x="531" y="157" width="4" height="1" fill="#000" />
<rect x="531" y="153" width="4" height="1" fill="#000" />
<rect x="531" y="148" width="4" height="1" fill="#000" />
<rect x="531" y="144" width="14" height="1" fill="#000" />
<text transform="translate(538,143) rotate(90)" font-size="12" fill="#000" text-anchor="end">80</text>
<rect x="531" y="139" width="4" height="1" fill="#000" />
<rect x="531" y="135" width="4" height="1" fill="#000" />
<rect x="531" y="131" width="4" height="1" fill="#000" />
<rect x="531" y="126" width="4" height="1" fill="#000" />
<rect x="531" y="122" width="6" height="1" fill="#000" />
<rect x="531" y="117" width="4" height="1" fill="#000" />
<rect x="531" y="113" width="4" height="1" fill="#000" />
<rect x="531" y="109" width="4" height="1" fill="#000" />
<rect x="531" y="104" width="4" height="1" fill="#000" />
<rect x="531" y="100" width="14" height="1" fill="#000" />
<text transform="translate(538,99) rotate(90)" font-size="12" fill="#000" text-anchor="end">90</text>
<rect x="531" y="96" width="4" height="1" fill="#000" />
<rect x="531" y="91" width="4" height="1" fill="#000" />
<rect x="531" y="87" width="4" height="1" fill="#000" />
<rect x="531" y="82" width="4" height="1" fill="#000" />
<rect x="531" y="78" width="6" height="1" fill="#000" />
<rect x="531" y="74" width="4" height="1" fill="#000" />
<rect x="531" y="69" width="4" height="1" fill="#000" />
<rect x="531" y="65" width="4" height="1" fill="#000" />
<rect x="531" y="60" width="4" height="1" fill="#000" />
<rect x="531" y="56" width="14" height="1" fill="#000" />
<rect x="553" y="26" width="154" height="2" fill="#3cc4c4" />
<rect x="553" y="120" width="154" height="2" fill="#3cc4c4" />
<rect x="553" y="214" width="154" height="2" fill="#3cc4c4" />
<rect x="553" y="308" width="154" height="2" fill="#3cc4c4" />
<rect x="553" y="402" width="154" height="2" fill="#3cc4c4" />
<text x="558" y="19.5" font-size="16" fill="#d0d0d0" text-anchor="start" textLength="31.4" lengthAdjust="spacingAndGlyphs" >48.5</text>
<rect x="591.2" y="8.9" width="4.8" height="5.2" rx="1.6" fill="none" stroke="#d0d0d0" stroke-width="1.2"/>
<g stroke="#fff" stroke-width="2.3" stroke-linecap="butt"><line x1="624.2" y1="4.5" x2="624.2" y2="22.7"/><line x1="616" y1="8.9" x2="632.5" y2="18.4"/><line x1="616" y1="18.4" x2="632.5" y2="8.9"/></g>
<rect x="685" y="7" width="17" height="13" rx="1.5" fill="none" stroke="#e0e0e0" stroke-width="1.3"/>
<rect x="682" y="10.5" width="3" height="6" fill="#e0e0e0" />
<rect x="690.0" y="10" width="1.3" height="7.5" fill="#a0a0a0" />
<rect x="692.3" y="10" width="1.3" height="7.5" fill="#a0a0a0" />
<rect x="694.6" y="10" width="1.3" height="7.5" fill="#a0a0a0" />
<rect x="696.9" y="10" width="1.3" height="7.5" fill="#a0a0a0" />
<rect x="699.2" y="10" width="1.3" height="7.5" fill="#a0a0a0" />
<text x="629" y="50.5" font-size="19" fill="#fff" text-anchor="middle" stroke="#fff" stroke-width="0.3" >Y мин</text>
<text x="629" y="82.5" font-size="20" fill="#fff" text-anchor="middle" stroke="#fff" stroke-width="0.3" >15.0</text>
<text x="557.5" y="111.5" font-size="17.5" fill="#c8c8c8" text-anchor="start" textLength="24.5" lengthAdjust="spacingAndGlyphs" stroke="#c8c8c8" stroke-width="0.1" >5.0</text>
<text x="701" y="111.5" font-size="16" fill="#c8c8c8" text-anchor="end" >мм</text>
<text x="629" y="144.5" font-size="19" fill="#fff" text-anchor="middle" stroke="#fff" stroke-width="0.3" >Y макс</text>
<text x="629" y="176.5" font-size="20" fill="#fff" text-anchor="middle" stroke="#fff" stroke-width="0.3" >50.0</text>
<text x="557.5" y="205.5" font-size="17.5" fill="#c8c8c8" text-anchor="start" textLength="24.5" lengthAdjust="spacingAndGlyphs" stroke="#c8c8c8" stroke-width="0.1" >5.0</text>
<text x="701" y="205.5" font-size="16" fill="#c8c8c8" text-anchor="end" >мм</text>
<text x="629" y="238.5" font-size="19" fill="#fff" text-anchor="middle" stroke="#fff" stroke-width="0.3" >X мин</text>
<text x="629" y="270.5" font-size="20" fill="#fff" text-anchor="middle" stroke="#fff" stroke-width="0.3" >-15.0</text>
<text x="557.5" y="299.5" font-size="17.5" fill="#c8c8c8" text-anchor="start" textLength="24.5" lengthAdjust="spacingAndGlyphs" stroke="#c8c8c8" stroke-width="0.1" >5.0</text>
<text x="701" y="299.5" font-size="16" fill="#c8c8c8" text-anchor="end" >мм</text>
<text x="629" y="332.5" font-size="19" fill="#fff" text-anchor="middle" stroke="#fff" stroke-width="0.3" >X макс</text>
<text x="629" y="364.5" font-size="20" fill="#fff" text-anchor="middle" stroke="#fff" stroke-width="0.3" >15.0</text>
<text x="557.5" y="393.5" font-size="17.5" fill="#c8c8c8" text-anchor="start" textLength="24.5" lengthAdjust="spacingAndGlyphs" stroke="#c8c8c8" stroke-width="0.1" >5.0</text>
<text x="701" y="393.5" font-size="16" fill="#c8c8c8" text-anchor="end" >мм</text>
<rect x="553" y="404" width="154" height="92" fill="url(#selh)" />
<text x="629" y="425.8" font-size="19" fill="#ffff40" text-anchor="middle" stroke="#ffff40" stroke-width="0.3" >Лупа</text>
<text x="629" y="459.5" font-size="22" fill="#ffff40" text-anchor="middle" stroke="#ffff40" stroke-width="0.3" >нет</text>
<rect x="706" y="0" width="1" height="530" fill="#e8e8e8" />
<rect x="0" y="496" width="707" height="2" fill="#3cc4c4" />
<rect x="283" y="498" width="138" height="32" fill="url(#selm)" />
<text x="70.0" y="521" font-size="19" fill="#fff" text-anchor="middle" textLength="109.4" lengthAdjust="spacingAndGlyphs" stroke="#fff" stroke-width="0.3" >ОСНОВНЫЕ</text>
<text x="211.2" y="521" font-size="19" fill="#fff" text-anchor="middle" textLength="101.1" lengthAdjust="spacingAndGlyphs" stroke="#fff" stroke-width="0.3" >МАТЕРИАЛ</text>
<text x="352.4" y="521" font-size="19" fill="#ffff40" text-anchor="middle" textLength="52.2" lengthAdjust="spacingAndGlyphs" stroke="#ffff40" stroke-width="0.3" >ЗОНА</text>
<text x="493.59999999999997" y="521" font-size="19" fill="#fff" text-anchor="middle" textLength="60.7" lengthAdjust="spacingAndGlyphs" stroke="#fff" stroke-width="0.3" >ЭКРАН</text>
<text x="634.8" y="521" font-size="19" fill="#fff" text-anchor="middle" textLength="116.4" lengthAdjust="spacingAndGlyphs" stroke="#fff" stroke-width="0.3" >ИЗМЕРЕНИЕ</text>
<rect x="15" y="526" width="110" height="1" fill="#d0d0d0" />
<rect x="577" y="526" width="116" height="1" fill="#d0d0d0" />
</svg></body></html>
